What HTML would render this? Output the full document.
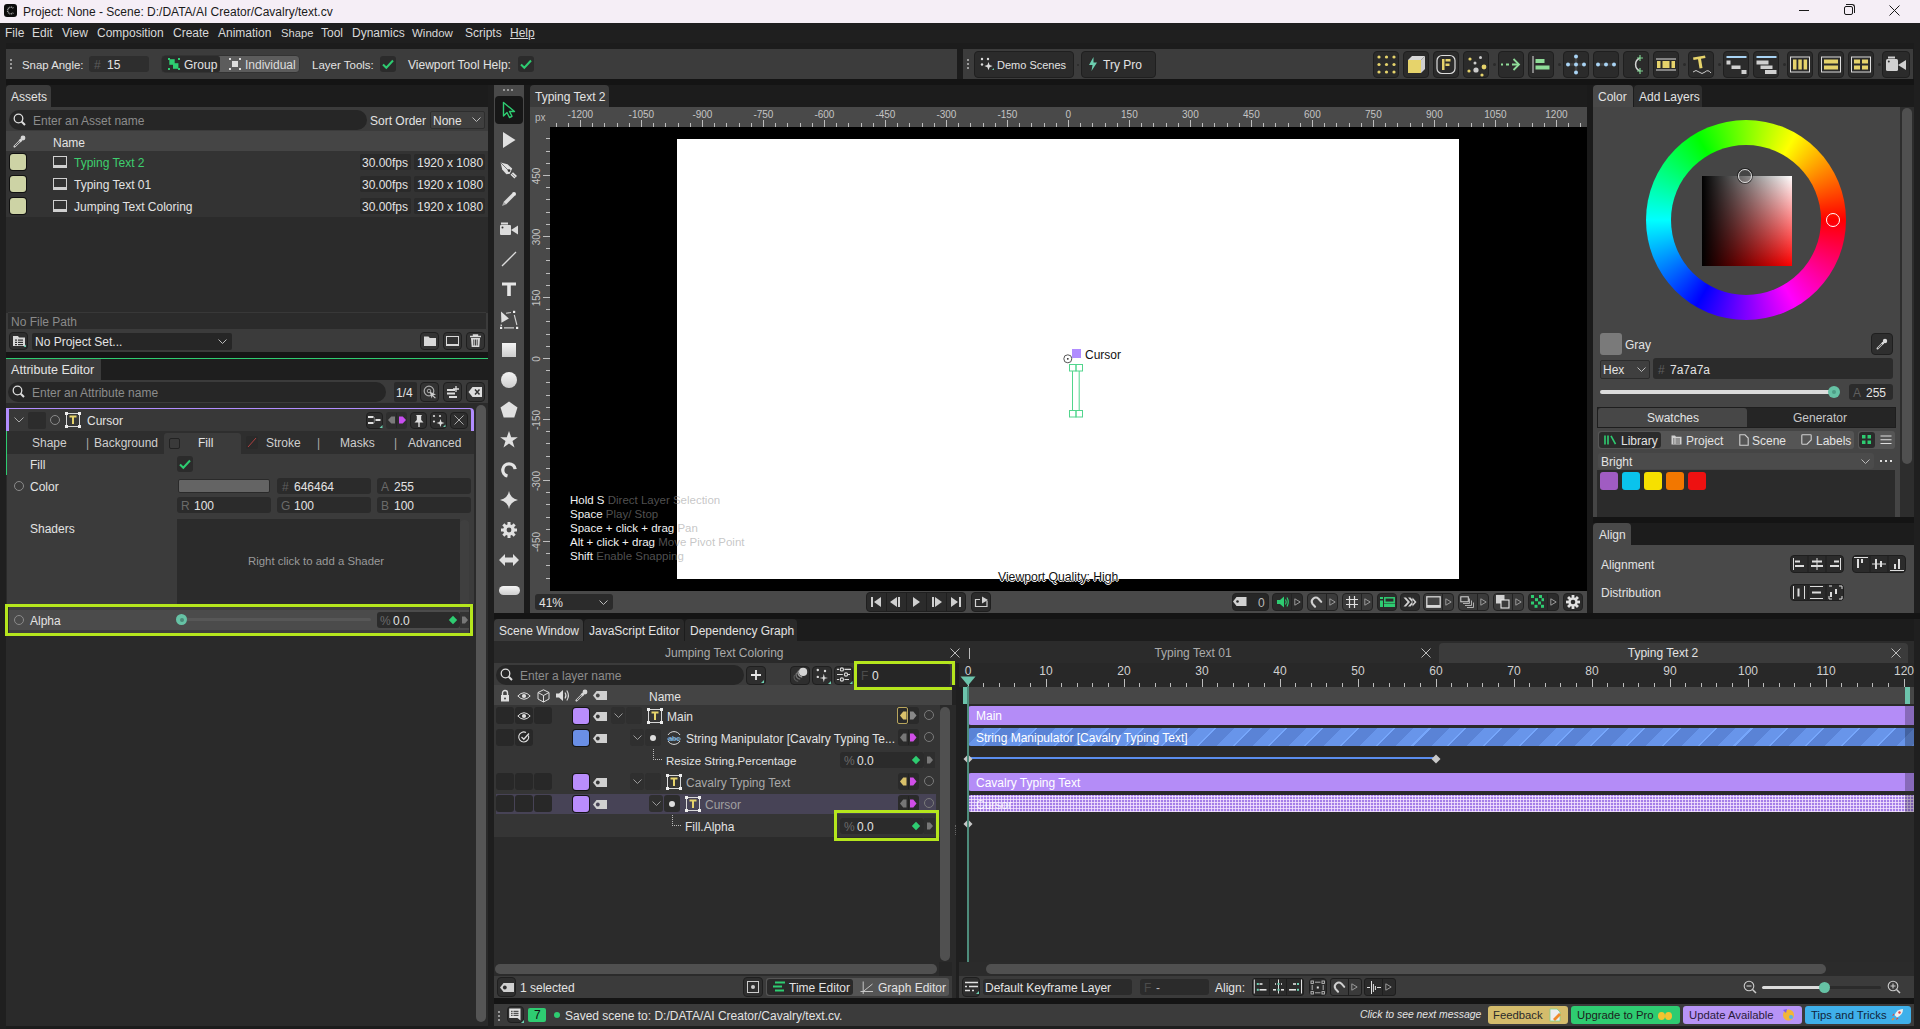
<!DOCTYPE html>
<html><head><meta charset="utf-8">
<style>
*{box-sizing:border-box;margin:0;padding:0}
html,body{width:1920px;height:1029px;overflow:hidden;background:#1c1c1c;font-family:"Liberation Sans",sans-serif;font-size:12px;color:#e3e3e3}
.a{position:absolute}
svg{position:absolute;overflow:visible}
.t{position:absolute;white-space:nowrap;line-height:12px;height:12px}
.panel{position:absolute;background:#3b3b3b}
.tab{position:absolute;background:#3b3b3b;border-radius:4px 4px 0 0}
.fld{position:absolute;background:#262626;border-radius:3px}
.btn{position:absolute;background:#2b2b2b;border:1px solid #1f1f1f;border-radius:4px}
.ph{color:#8c8c8c}
.dim{color:#6e6e6e}
</style></head><body>
<!-- TITLE BAR -->
<div class="a" style="left:0;top:0;width:1920px;height:23px;background:#f5eef6"></div>
<div class="a" style="left:4px;top:4px;width:13px;height:13px;background:#0c0c0c;border-radius:3px"></div>
<svg style="left:4px;top:4px" width="13" height="13"><path d="M9.3 4.2A3.3 3.3 0 1 0 9.3 8.8" fill="none" stroke="#9a9a9a" stroke-width="1.6" stroke-dasharray="1 .6"/></svg>
<div class="t" style="left:23px;top:6px;color:#1a1a1a">Project: None - Scene: D:/DATA/AI Creator/Cavalry/text.cv</div>
<div class="a" style="left:1799px;top:10px;width:10px;height:1px;background:#1a1a1a"></div>
<div class="a" style="left:1844px;top:6px;width:9px;height:9px;border:1px solid #1a1a1a;border-radius:2px"></div>
<div class="a" style="left:1846px;top:4px;width:9px;height:9px;border-top:1px solid #1a1a1a;border-right:1px solid #1a1a1a;border-radius:0 3px 0 0"></div>
<svg style="left:1889px;top:5px" width="11" height="11"><path d="M.5 .5L10.5 10.5M10.5 .5L.5 10.5" stroke="#1a1a1a" stroke-width="1"/></svg>

<!-- MENU -->
<div class="a" style="left:0;top:23px;width:1920px;height:20px;background:#1f1f1f"></div>
<div class="t" style="left:5px;top:27px;color:#d9d9d9">File</div>
<div class="t" style="left:32px;top:27px;color:#d9d9d9">Edit</div>
<div class="t" style="left:62px;top:27px;color:#d9d9d9">View</div>
<div class="t" style="left:97px;top:27px;color:#d9d9d9">Composition</div>
<div class="t" style="left:173px;top:27px;color:#d9d9d9">Create</div>
<div class="t" style="left:218px;top:27px;color:#d9d9d9">Animation</div>
<div class="t" style="left:281px;top:27px;color:#d9d9d9;font-size:11.2px">Shape</div>
<div class="t" style="left:321px;top:27px;color:#d9d9d9">Tool</div>
<div class="t" style="left:352px;top:27px;color:#d9d9d9">Dynamics</div>
<div class="t" style="left:412px;top:27px;color:#d9d9d9;font-size:11.5px">Window</div>
<div class="t" style="left:465px;top:27px;color:#d9d9d9">Scripts</div>
<div class="t" style="left:510px;top:27px;color:#d9d9d9;text-decoration:underline">Help</div>

<!-- GAPBAR --><div class="a" style="left:6px;top:79px;width:1908px;height:6px;background:#141414"></div>
<!-- TOOLBAR 1 -->
<div class="a" style="left:6px;top:49px;width:951px;height:30px;background:#3c3c3c"></div>
<div class="a" style="left:10px;top:59px;width:2px;height:2px;background:#999;box-shadow:0 4px #999,0 8px #999"></div>
<div class="t" style="left:22px;top:59px;font-size:11.4px">Snap Angle:</div>
<div class="fld" style="left:89px;top:56px;width:60px;height:16px;background:#2e2e2e"></div>
<div class="t dim" style="left:94px;top:59px;color:#5c5c5c">#</div>
<div class="t" style="left:107px;top:59px">15</div>
<div class="a" style="left:161px;top:55px;width:139px;height:18px;background:#5c5c5c;border-radius:4px;border:1px solid #333"></div>
<div class="a" style="left:162px;top:56px;width:58px;height:16px;background:#2b2b2b;border-radius:2px"></div>
<svg style="left:168px;top:58px" width="12" height="12"><g fill="#2ecc71"><rect x="0" y="0" width="2" height="2"/><rect x="10" y="0" width="2" height="2"/><rect x="0" y="10" width="2" height="2"/><rect x="10" y="10" width="2" height="2"/><rect x="1.3" y="1.2" width="5.4" height="5.6"/><rect x="5" y="5.2" width="5.4" height="5.6"/></g></svg>
<div class="t" style="left:184px;top:59px">Group</div>
<svg style="left:229px;top:58px" width="12" height="12"><g fill="#ddd"><rect x="0" y="0" width="2" height="2"/><rect x="10" y="0" width="2" height="2"/><rect x="0" y="10" width="2" height="2"/><rect x="10" y="10" width="2" height="2"/><rect x="3" y="3" width="6" height="6"/></g></svg>
<div class="t" style="left:245px;top:59px;color:#dcdcdc">Individual</div>
<div class="t" style="left:312px;top:59px;font-size:11.5px">Layer Tools:</div>
<div class="a" style="left:380px;top:56px;width:16px;height:16px;background:#2b2b2b;border-radius:3px"></div>
<svg style="left:380px;top:56px" width="16" height="16"><path d="M3 8.5L6.3 11.8L13 4.5" fill="none" stroke="#2ecc71" stroke-width="2"/></svg>
<div class="t" style="left:408px;top:59px">Viewport Tool Help:</div>
<div class="a" style="left:518px;top:56px;width:16px;height:16px;background:#2b2b2b;border-radius:3px"></div>
<svg style="left:518px;top:56px" width="16" height="16"><path d="M3 8.5L6.3 11.8L13 4.5" fill="none" stroke="#2ecc71" stroke-width="2"/></svg>

<!-- TOOLBAR 2 -->
<div class="a" style="left:963px;top:49px;width:950px;height:30px;background:#3c3c3c"></div>
<div class="a" style="left:967px;top:59px;width:2px;height:2px;background:#999;box-shadow:0 4px #999,0 8px #999"></div>
<div class="btn" style="left:974px;top:51px;width:100px;height:27px"></div>
<svg style="left:980px;top:57px" width="14" height="14"><g fill="#ddd"><circle cx="2" cy="2" r="1.2"/><circle cx="8" cy="2" r="1.2"/><circle cx="2" cy="7.5" r="1.2"/><path d="M8.5 5L9.6 8L12.6 9.1L9.6 10.2L8.5 13.2L7.4 10.2L4.4 9.1L7.4 8Z"/></g><path d="M12 13L14 11V13Z" fill="#6ccfb0"/></svg>
<div class="t" style="left:997px;top:59px;font-size:11px">Demo Scenes</div>
<div class="a" style="left:1077px;top:64px;width:2px;height:2px;border-radius:1px;background:#2a2a2a"></div>
<div class="btn" style="left:1081px;top:51px;width:75px;height:27px"></div>
<svg style="left:1088px;top:57px" width="10" height="14"><path d="M5.5 0L1 8H4.5L3.5 14L9 5.5H5.5Z" fill="#6ccfb0"/></svg>
<div class="t" style="left:1103px;top:59px">Try Pro</div>

<div class="btn" style="left:1373px;top:51px;width:26px;height:27px"></div>
<div class="btn" style="left:1403px;top:51px;width:26px;height:27px"></div>
<div class="btn" style="left:1433px;top:51px;width:26px;height:27px"></div>
<div class="btn" style="left:1463px;top:51px;width:26px;height:27px"></div>
<div class="btn" style="left:1498px;top:51px;width:26px;height:27px"></div>
<div class="btn" style="left:1528px;top:51px;width:26px;height:27px"></div>
<div class="btn" style="left:1563px;top:51px;width:26px;height:27px"></div>
<div class="btn" style="left:1593px;top:51px;width:26px;height:27px"></div>
<div class="btn" style="left:1623px;top:51px;width:26px;height:27px"></div>
<div class="btn" style="left:1653px;top:51px;width:26px;height:27px"></div>
<div class="btn" style="left:1688px;top:51px;width:26px;height:27px"></div>
<div class="btn" style="left:1723px;top:51px;width:26px;height:27px"></div>
<div class="btn" style="left:1753px;top:51px;width:26px;height:27px"></div>
<div class="btn" style="left:1787px;top:51px;width:26px;height:27px"></div>
<div class="btn" style="left:1818px;top:51px;width:26px;height:27px"></div>
<div class="btn" style="left:1848px;top:51px;width:26px;height:27px"></div>
<div class="btn" style="left:1882px;top:51px;width:28px;height:27px"></div>
<div class="a" style="left:1493px;top:63px;width:3px;height:3px;border-radius:2px;background:#2a2a2a"></div>
<div class="a" style="left:1558px;top:63px;width:3px;height:3px;border-radius:2px;background:#2a2a2a"></div>
<div class="a" style="left:1683px;top:63px;width:3px;height:3px;border-radius:2px;background:#2a2a2a"></div>
<div class="a" style="left:1718px;top:63px;width:3px;height:3px;border-radius:2px;background:#2a2a2a"></div>
<div class="a" style="left:1783px;top:63px;width:3px;height:3px;border-radius:2px;background:#2a2a2a"></div>
<div class="a" style="left:1878px;top:63px;width:3px;height:3px;border-radius:2px;background:#2a2a2a"></div>
<svg style="left:1373px;top:51px" width="26" height="27"><g fill="#e6d36b"><circle cx="6.0" cy="6.0" r="1.6"/><circle cx="13.5" cy="6.0" r="1.6"/><circle cx="21.0" cy="6.0" r="1.6"/><circle cx="6.0" cy="13.5" r="1.6"/><circle cx="13.5" cy="13.5" r="1.6"/><circle cx="21.0" cy="13.5" r="1.6"/><circle cx="6.0" cy="21.0" r="1.6"/><circle cx="13.5" cy="21.0" r="1.6"/><circle cx="21.0" cy="21.0" r="1.6"/></g></svg>
<svg style="left:1403px;top:51px" width="26" height="27"><path d="M5 9L9 5H22L18 9Z" fill="#d8d8d8"/><path d="M18 9L22 5V18L18 22Z" fill="#cfcfcf"/><rect x="5" y="9" width="13" height="13" fill="#e6d36b"/></svg>
<svg style="left:1433px;top:51px" width="26" height="27"><rect x="4" y="4.5" width="18" height="18" rx="5" fill="none" stroke="#ddd" stroke-width="1.2"/><rect x="9" y="8" width="2.5" height="11" fill="#e6d36b"/><rect x="12.5" y="8" width="5" height="2.5" fill="#e6d36b"/><rect x="12.5" y="12.5" width="4" height="2.5" fill="#e6d36b"/></svg>
<svg style="left:1463px;top:51px" width="26" height="27"><circle cx="7" cy="8" r="1.6" fill="#e6d36b"/><circle cx="17.5" cy="6.5" r="1.5" fill="#ccc"/><circle cx="12" cy="12" r="1.5" fill="#ccc"/><circle cx="21" cy="16" r="2.4" fill="#e6d36b"/><circle cx="13" cy="19" r="2.6" fill="#ccc"/><circle cx="6" cy="20" r="1.6" fill="#e6d36b"/><circle cx="19" cy="24" r="1.6" fill="#e6d36b"/></svg>
<svg style="left:1498px;top:51px" width="26" height="27"><path d="M3 13.5H5M8 13.5H11M14 13.5H21" stroke="#8fdc98" stroke-width="1.8"/><path d="M15.5 8L21 13.5L15.5 19" fill="none" stroke="#8fdc98" stroke-width="1.8"/></svg>
<svg style="left:1528px;top:51px" width="26" height="27"><rect x="4.5" y="5" width="1" height="17" fill="#ddd"/><rect x="7.5" y="8" width="9" height="4" fill="#8fdc98"/><rect x="7.5" y="14.5" width="14" height="4" fill="#8fdc98"/></svg>
<svg style="left:1563px;top:51px" width="26" height="27"><path d="M13 6V21M5 13.5H21" stroke="#444" stroke-width="2.5"/><g fill="#a9d4f5"><circle cx="13" cy="5.5" r="2"/><circle cx="13" cy="13.5" r="2"/><circle cx="13" cy="21.5" r="2"/><circle cx="5" cy="13.5" r="2"/><circle cx="21" cy="13.5" r="2"/></g></svg>
<svg style="left:1593px;top:51px" width="26" height="27"><path d="M5 13.5H21" stroke="#444" stroke-width="2.5"/><g fill="#a9d4f5"><circle cx="5" cy="13.5" r="2"/><circle cx="13" cy="13.5" r="2"/><circle cx="21" cy="13.5" r="2"/></g></svg>
<svg style="left:1623px;top:51px" width="26" height="27"><path d="M17 7A7 7 0 0 0 17 20" fill="none" stroke="#d0d0d0" stroke-width="1.5"/><path d="M17 4V10M14 7H20M17 17V23M14 20H20" stroke="#7cd08e" stroke-width="1.2"/></svg>
<svg style="left:1653px;top:51px" width="26" height="27"><path d="M3 8H23M3 19H23" stroke="#ddd" stroke-width="1"/><rect x="4" y="10" width="3.5" height="7" fill="#e6d36b"/><rect x="9.5" y="10" width="7" height="7" fill="#e6d36b"/><rect x="18.5" y="10" width="3.5" height="7" fill="#e6d36b"/></svg>
<svg style="left:1688px;top:51px" width="26" height="27"><path d="M5 6.5L17 4.5L17.5 7L13 7.8L14.5 17L11.5 17.5L10 8.3L5.5 9Z" fill="#e6d36b"/><path d="M5 21Q8 18 11 21T17 21T23 22" fill="none" stroke="#ccc" stroke-width="1"/></svg>
<svg style="left:1723px;top:51px" width="26" height="27"><rect x="3.5" y="5" width="20" height="2" fill="#a9d4f5"/><rect x="3.5" y="9.5" width="4" height="4" fill="#d0d0d0"/><rect x="8.5" y="14.5" width="9" height="3.5" fill="#d0d0d0"/><rect x="18.5" y="19" width="5" height="4" fill="#d0d0d0"/></svg>
<svg style="left:1753px;top:51px" width="26" height="27"><rect x="3.5" y="5" width="20" height="2" fill="#a9d4f5"/><rect x="3.5" y="9.5" width="12" height="4" fill="#d0d0d0"/><rect x="7.5" y="14.5" width="12" height="3.5" fill="#d0d0d0"/><rect x="12" y="19" width="11.5" height="4" fill="#d0d0d0"/></svg>
<svg style="left:1787px;top:51px" width="26" height="27"><rect x="3.5" y="6" width="19" height="15" fill="none" stroke="#ddd" stroke-width="1"/><rect x="6" y="8.5" width="3.5" height="10" fill="#e6d36b"/><rect x="11.3" y="8.5" width="3.5" height="10" fill="#e6d36b"/><rect x="16.6" y="8.5" width="3.5" height="10" fill="#e6d36b"/></svg>
<svg style="left:1818px;top:51px" width="26" height="27"><rect x="3.5" y="6" width="19" height="15" fill="none" stroke="#ddd" stroke-width="1"/><rect x="6" y="8.5" width="14" height="4" fill="#e6d36b"/><rect x="6" y="14.5" width="14" height="4" fill="#e6d36b"/></svg>
<svg style="left:1848px;top:51px" width="26" height="27"><rect x="3.5" y="6" width="19" height="15" fill="none" stroke="#ddd" stroke-width="1"/><rect x="6" y="8.5" width="6" height="4" fill="#e6d36b"/><rect x="14" y="8.5" width="6" height="4" fill="#e6d36b"/><rect x="6" y="14.5" width="6" height="4" fill="#e6d36b"/><rect x="14" y="14.5" width="6" height="4" fill="#e6d36b"/></svg>
<svg style="left:1882px;top:51px" width="28" height="27"><rect x="4" y="8" width="12" height="12" rx="1.5" fill="#d0d0d0"/><rect x="6" y="5.5" width="7" height="2" fill="#d0d0d0"/><path d="M16 14L24 9V19Z" fill="#d0d0d0"/><circle cx="6.8" cy="10.5" r="1" fill="#333"/></svg>
<!-- ============ LEFT: ASSETS ============ -->
<div class="a" style="left:0;top:43px;width:6px;height:986px;background:#1f1f1f"></div>
<div class="tab" style="left:6px;top:85px;width:45px;height:22px;background:#3b3b3b"></div>
<div class="t" style="left:11px;top:91px">Assets</div>
<div class="panel" style="left:6px;top:107px;width:482px;height:245px;background:#3b3b3b"></div>
<div class="a" style="left:9px;top:110px;width:358px;height:20px;background:#262626;border-radius:10px"></div>
<svg style="left:13px;top:113px" width="14" height="14"><circle cx="5.5" cy="5.5" r="4.3" fill="none" stroke="#ddd" stroke-width="1.3"/><path d="M8.7 8.7L12 12" stroke="#ddd" stroke-width="2"/></svg>
<div class="t ph" style="left:33px;top:115px">Enter an Asset name</div>
<div class="t" style="left:370px;top:115px">Sort Order</div>
<div class="a" style="left:430px;top:111px;width:55px;height:18px;background:#3f3f3f;border:1px solid #2d2d2d;border-radius:2px"></div>
<div class="t" style="left:433px;top:115px">None</div>
<svg style="left:472px;top:117px" width="9" height="6"><path d="M.5 .5L4.5 4.5L8.5 .5" fill="none" stroke="#bbb" stroke-width="1"/></svg>
<div class="a" style="left:6px;top:131px;width:482px;height:20px;background:#454545"></div>
<svg style="left:13px;top:135px" width="13" height="13"><path d="M1.5 11.5L8 5" stroke="#ccc" stroke-width="2.2" stroke-linecap="round"/><path d="M2 11L7.8 5.2" stroke="#454545" stroke-width=".9"/><circle cx="10" cy="3" r="2.4" fill="#d6d6d6"/><path d="M6.5 4.5L8.5 6.5" stroke="#d6d6d6" stroke-width="2.5"/></svg>
<div class="t" style="left:53px;top:137px">Name</div>
<div class="a" style="left:6px;top:151px;width:482px;height:66px;background:#333"></div>
<div class="a" style="left:6px;top:217px;width:482px;height:96px;background:#2b2b2b"></div>
<!-- rows -->
<div class="a" style="left:10px;top:154px;width:16px;height:16px;background:#cdd3a5;border-radius:3px;box-shadow:0 0 0 1px #111"></div>
<div class="a" style="left:10px;top:176px;width:16px;height:16px;background:#cdd3a5;border-radius:3px;box-shadow:0 0 0 1px #111"></div>
<div class="a" style="left:10px;top:198px;width:16px;height:16px;background:#cdd3a5;border-radius:3px;box-shadow:0 0 0 1px #111"></div>
<div class="a" style="left:53px;top:156px;width:14px;height:12px;border:1.3px solid #d0d0d0;border-bottom-width:3px"></div>
<div class="a" style="left:53px;top:178px;width:14px;height:12px;border:1.3px solid #d0d0d0;border-bottom-width:3px"></div>
<div class="a" style="left:53px;top:200px;width:14px;height:12px;border:1.3px solid #d0d0d0;border-bottom-width:3px"></div>
<div class="t" style="left:74px;top:157px;color:#3ecf6e">Typing Text 2</div>
<div class="t" style="left:74px;top:179px">Typing Text 01</div>
<div class="t" style="left:74px;top:201px">Jumping Text Coloring</div>
<div class="a" style="left:360px;top:154px;width:51px;height:16px;background:#2a2a2a;border-radius:2px"></div>
<div class="a" style="left:414px;top:154px;width:71px;height:16px;background:#2a2a2a;border-radius:2px"></div>
<div class="a" style="left:360px;top:176px;width:51px;height:16px;background:#2a2a2a;border-radius:2px"></div>
<div class="a" style="left:414px;top:176px;width:71px;height:16px;background:#2a2a2a;border-radius:2px"></div>
<div class="a" style="left:360px;top:198px;width:51px;height:16px;background:#2a2a2a;border-radius:2px"></div>
<div class="a" style="left:414px;top:198px;width:71px;height:16px;background:#2a2a2a;border-radius:2px"></div>
<div class="t" style="left:362px;top:157px">30.00fps</div><div class="t" style="left:417px;top:157px">1920 x 1080</div>
<div class="t" style="left:362px;top:179px">30.00fps</div><div class="t" style="left:417px;top:179px">1920 x 1080</div>
<div class="t" style="left:362px;top:201px">30.00fps</div><div class="t" style="left:417px;top:201px">1920 x 1080</div>
<!-- file path -->
<div class="a" style="left:8px;top:312px;width:478px;height:17px;background:#2b2b2b;border-top:1px solid #383838"></div>
<div class="t" style="left:11px;top:316px;color:#8a8a8a">No File Path</div>
<div class="btn" style="left:9px;top:332px;width:19px;height:18px;background:#2e2e2e"></div>
<svg style="left:12px;top:335px" width="14" height="12"><path d="M1 1H6L7 2.5H13V11H1Z" fill="#d8d8d8"/><g fill="#2e2e2e"><rect x="3" y="4.5" width="2" height="1.2"/><rect x="6" y="4.5" width="5" height="1.2"/><rect x="3" y="6.8" width="2" height="1.2"/><rect x="6" y="6.8" width="5" height="1.2"/><rect x="3" y="9" width="2" height="1.2"/><rect x="6" y="9" width="5" height="1.2"/></g><path d="M11.5 12L14 9.5V12Z" fill="#6ccfb0"/></svg>
<div class="a" style="left:32px;top:333px;width:200px;height:17px;background:#262626;border-radius:2px"></div>
<div class="t" style="left:35px;top:336px">No Project Set...</div>
<svg style="left:218px;top:339px" width="9" height="6"><path d="M.5 .5L4.5 4.5L8.5 .5" fill="none" stroke="#bbb" stroke-width="1"/></svg>
<div class="btn" style="left:420px;top:332px;width:19px;height:18px;background:#333"></div>
<svg style="left:423px;top:335px" width="14" height="12"><path d="M1 1.5H5.5L6.8 3H13V11H1Z" fill="#d8d8d8"/></svg>
<div class="btn" style="left:443px;top:332px;width:19px;height:18px;background:#333"></div>
<div class="a" style="left:446px;top:336px;width:13px;height:10px;border:1.3px solid #d8d8d8;border-bottom-width:2.5px"></div>
<div class="btn" style="left:466px;top:332px;width:19px;height:18px;background:#333"></div>
<svg style="left:469px;top:334px" width="13" height="14"><path d="M1 2.5H12M4.5 2.5V1H8.5V2.5" stroke="#d8d8d8" stroke-width="1.4" fill="none"/><path d="M2 4H11L10.3 13H2.7Z" fill="#d8d8d8"/><path d="M4.8 5.5V11.5M6.5 5.5V11.5M8.2 5.5V11.5" stroke="#333" stroke-width=".9"/></svg>
<div class="a" style="left:6px;top:352px;width:482px;height:6px;background:#161616"></div>
<div class="a" style="left:6px;top:358px;width:482px;height:1px;background:#2ecc71"></div>

<!-- ============ LEFT: ATTRIBUTE EDITOR ============ -->
<div class="a" style="left:6px;top:359px;width:482px;height:21px;background:#1e1e1e"></div>
<div class="tab" style="left:6px;top:359px;width:95px;height:21px;background:#3b3b3b;border-radius:0"></div>
<div class="t" style="left:11px;top:364px;font-size:12.6px">Attribute Editor</div>
<div class="panel" style="left:6px;top:380px;width:482px;height:25px;background:#3b3b3b"></div>
<div class="a" style="left:8px;top:382px;width:378px;height:20px;background:#262626;border-radius:10px"></div>
<svg style="left:12px;top:385px" width="14" height="14"><circle cx="5.5" cy="5.5" r="4.3" fill="none" stroke="#ddd" stroke-width="1.3"/><path d="M8.7 8.7L12 12" stroke="#ddd" stroke-width="2"/></svg>
<div class="t ph" style="left:32px;top:387px">Enter an Attribute name</div>
<div class="a" style="left:394px;top:382px;width:23px;height:20px;background:#2a2a2a;border-radius:2px"></div>
<div class="t" style="left:396px;top:387px">1/4</div>
<div class="btn" style="left:420px;top:382px;width:19px;height:20px;background:#333"></div>
<svg style="left:423px;top:385px" width="14" height="14"><circle cx="6" cy="6" r="4.8" fill="none" stroke="#aaa" stroke-width="1.2"/><circle cx="6" cy="6" r="1.8" fill="none" stroke="#aaa" stroke-width="1"/><path d="M6.5 6.5L13 9.5L10.2 10.2L12.8 12.8L12 13.6L9.4 11L8.8 13.4Z" fill="#ccc"/></svg>
<div class="btn" style="left:443px;top:382px;width:19px;height:20px;background:#333"></div>
<svg style="left:446px;top:385px" width="14" height="14"><g fill="#ddd"><rect x="1" y="4" width="8" height="2"/><rect x="1" y="7.5" width="8" height="2"/><rect x="3" y="11" width="8" height="2"/><path d="M10 1V7M7 4H13" stroke="#ddd" stroke-width="1.3"/></g></svg>
<div class="btn" style="left:466px;top:382px;width:19px;height:20px;background:#333"></div>
<svg style="left:468px;top:386px" width="15" height="12"><path d="M4.5 1H14V11H4.5L.5 6Z" fill="#ddd"/><path d="M7 3.5L11.5 8.5M11.5 3.5L7 8.5" stroke="#333" stroke-width="1.5"/></svg>
<div class="panel" style="left:6px;top:403px;width:482px;height:623px;background:#2a2a2a"></div>
<div class="a" style="left:476px;top:405px;width:10px;height:617px;background:#555;border-radius:5px"></div>
<!-- Cursor header -->
<div class="a" style="left:6px;top:408px;width:468px;height:23px;background:#383838;border-top:1.5px solid #b28dff;border-left:3px solid #b28dff;border-right:3.5px solid #b28dff;border-radius:0 4px 0 0"></div>
<svg style="left:14px;top:417px" width="10" height="6"><path d="M.5 .5L5 5L9.5 .5" fill="none" stroke="#aaa" stroke-width="1"/></svg>
<div class="a" style="left:28px;top:412px;width:18px;height:17px;background:#2c2c2c;border-radius:2px"></div>
<div class="a" style="left:50px;top:415px;width:10px;height:10px;border:1.2px solid #8a8a8a;border-radius:50%"></div>
<svg style="left:65px;top:412px" width="16" height="16"><rect x="1.5" y="1.5" width="13" height="13" fill="none" stroke="#d8d8d8" stroke-width="1"/><g fill="#eee"><rect x="0" y="0" width="3" height="3"/><rect x="13" y="0" width="3" height="3"/><rect x="0" y="13" width="3" height="3"/><rect x="13" y="13" width="3" height="3"/></g><path d="M4.5 4.5H11.5M8 4.5V12" stroke="#e6d36b" stroke-width="2"/></svg>
<div class="t" style="left:87px;top:415px">Cursor</div>
<div class="btn" style="left:366px;top:412px;width:17px;height:17px;background:#2e2e2e"></div>
<svg style="left:367px;top:414px" width="16" height="14"><g fill="#e0e0e0"><rect x="1" y="2" width="5.5" height="2"/><rect x="1" y="8" width="5.5" height="2"/><rect x="8.5" y="5" width="5" height="2"/></g><path d="M7.3 3V9M7.3 6H8.5" stroke="#888" stroke-width=".8"/><path d="M12.5 14L15.5 11V14Z" fill="#6ccfb0"/></svg>
<div class="a" style="left:386px;top:412px;width:21px;height:17px;background:#2e2e2e;border-radius:3px"></div>
<div class="a" style="left:396px;top:413px;width:1px;height:15px;background:#262626"></div><svg style="left:387px;top:416px" width="20" height="8"><path d="M8 .5V7.5H4.3L1 4L4.3 .5Z" fill="#7a7a7a"/><path d="M12 .5H15.7L19 4L15.7 7.5H12Z" fill="#c84ef0"/></svg>
<div class="btn" style="left:410px;top:412px;width:17px;height:17px;background:#2e2e2e"></div>
<svg style="left:413px;top:414px" width="12" height="14"><path d="M3 1H9L8.2 2.3V6L10.5 8.5H1.5L3.8 6V2.3Z" fill="#ddd"/><path d="M6 8V13" stroke="#ddd" stroke-width="1.4"/></svg>
<div class="btn" style="left:430px;top:412px;width:17px;height:17px;background:#2e2e2e"></div>
<svg style="left:432px;top:414px" width="14" height="14"><g fill="#ddd"><circle cx="2" cy="2" r="1.1"/><circle cx="8" cy="2" r="1.1"/><circle cx="2" cy="7.5" r="1.1"/><path d="M8.5 5L9.5 8L12.5 9L9.5 10L8.5 13L7.5 10L4.5 9L7.5 8Z"/></g><path d="M11 13L13.5 10.5V13Z" fill="#6ccfb0"/></svg>
<div class="btn" style="left:450px;top:412px;width:18px;height:17px;background:#2e2e2e"></div>
<svg style="left:454px;top:415px" width="10" height="10"><path d="M.5 .5L9.5 9.5M9.5 .5L.5 9.5" stroke="#bbb" stroke-width=".9"/></svg>
<!-- tabs row -->
<div class="a" style="left:6px;top:431px;width:468px;height:23px;background:#2e2e2e"></div>
<div class="a" style="left:6px;top:431px;width:1px;height:44px;background:#2ecc71"></div>
<div class="t" style="left:32px;top:437px;color:#cfcfcf">Shape</div>
<div class="t" style="left:86px;top:437px;color:#aaa">|</div>
<div class="t" style="left:94px;top:437px;color:#cfcfcf">Background</div>
<div class="a" style="left:164px;top:433px;width:77px;height:21px;background:#3b3b3b;border-radius:3px 3px 0 0"></div>
<div class="a" style="left:169px;top:438px;width:11px;height:11px;background:#3a3a3a;border:1.5px solid #222;border-radius:2px"></div>
<div class="t" style="left:198px;top:437px">Fill</div>
<div class="a" style="left:246px;top:436px;width:12px;height:13px;background:#2a2a2a;border-radius:2px"></div>
<svg style="left:247px;top:437px" width="10" height="11"><path d="M1 10L9 1" stroke="#b04040" stroke-width="1"/></svg>
<div class="t" style="left:266px;top:437px;color:#cfcfcf">Stroke</div>
<div class="t" style="left:317px;top:437px;color:#aaa">|</div>
<div class="t" style="left:340px;top:437px;color:#cfcfcf">Masks</div>
<div class="t" style="left:394px;top:437px;color:#aaa">|</div>
<div class="t" style="left:408px;top:437px;color:#cfcfcf">Advanced</div>
<!-- content -->
<div class="a" style="left:7px;top:454px;width:467px;height:150px;background:#3b3b3b"></div>
<div class="t" style="left:30px;top:459px">Fill</div>
<div class="a" style="left:177px;top:456px;width:16px;height:16px;background:#2b2b2b;border-radius:3px"></div>
<svg style="left:177px;top:456px" width="16" height="16"><path d="M3 8.5L6.3 11.8L13 4.5" fill="none" stroke="#2ecc71" stroke-width="2"/></svg>
<div class="a" style="left:14px;top:481px;width:10px;height:10px;border:1.2px solid #8a8a8a;border-radius:50%"></div>
<div class="t" style="left:30px;top:481px">Color</div>
<div class="a" style="left:178px;top:479px;width:92px;height:14px;background:#646464;border:1px solid #2a2a2a;border-radius:2px"></div>
<div class="fld" style="left:277px;top:478px;width:94px;height:16px;background:#2b2b2b"></div>
<div class="t" style="left:282px;top:481px;color:#5e5e5e">#</div>
<div class="t" style="left:294px;top:481px">646464</div>
<div class="fld" style="left:377px;top:478px;width:94px;height:16px;background:#2b2b2b"></div>
<div class="t" style="left:381px;top:481px;color:#6a6a6a">A</div>
<div class="t" style="left:394px;top:481px">255</div>
<div class="fld" style="left:177px;top:497px;width:94px;height:16px;background:#2b2b2b"></div>
<div class="t" style="left:181px;top:500px;color:#6a6a6a">R</div>
<div class="t" style="left:194px;top:500px">100</div>
<div class="fld" style="left:277px;top:497px;width:94px;height:16px;background:#2b2b2b"></div>
<div class="t" style="left:281px;top:500px;color:#6a6a6a">G</div>
<div class="t" style="left:294px;top:500px">100</div>
<div class="fld" style="left:377px;top:497px;width:94px;height:16px;background:#2b2b2b"></div>
<div class="t" style="left:381px;top:500px;color:#6a6a6a">B</div>
<div class="t" style="left:394px;top:500px">100</div>
<div class="t" style="left:30px;top:523px">Shaders</div>
<div class="a" style="left:177px;top:519px;width:283px;height:85px;background:#2b2b2b"></div>
<div class="a" style="left:460px;top:520px;width:9px;height:84px;background:#3f3f3f;border-radius:4px"></div>
<div class="t" style="left:248px;top:555px;color:#9a9a9a;font-size:11.4px">Right click to add a Shader</div>
<!-- alpha -->
<div class="a" style="left:5px;top:604px;width:468px;height:32px;border:3px solid #b5e61d"></div>
<div class="a" style="left:9px;top:607px;width:460px;height:26px;background:#3f3f3f"></div><div class="a" style="left:9px;top:610px;width:460px;height:20px;background:#4b4b4b"></div>
<div class="a" style="left:14px;top:615px;width:10px;height:10px;border:1.2px solid #8a8a8a;border-radius:50%"></div>
<div class="t" style="left:30px;top:615px">Alpha</div>
<div class="a" style="left:182px;top:618px;width:189px;height:3px;background:#575757;border-radius:2px"></div>
<div class="a" style="left:176px;top:614px;width:11px;height:11px;background:#66c2a5;border-radius:50%"></div>
<div class="a" style="left:179.5px;top:617.5px;width:4px;height:4px;background:#4a8a78;border-radius:50%"></div>
<div class="fld" style="left:377px;top:612px;width:83px;height:16px;background:#2b2b2b"></div>
<div class="t" style="left:380px;top:615px;color:#6a6a6a">%</div>
<div class="t" style="left:393px;top:615px">0.0</div>
<svg style="left:448px;top:615px" width="10" height="10"><path d="M5 .8L9.2 5L5 9.2L.8 5Z" fill="#2ecc71"/></svg>
<div class="a" style="left:460px;top:612px;width:9px;height:16px;background:#333"></div>
<svg style="left:462px;top:616px" width="6" height="8"><path d="M0 .5H3L6 4L3 7.5H0Z" fill="#777"/></svg>

<!-- ============ TOOLS COLUMN ============ -->
<div class="a" style="left:488px;top:85px;width:6px;height:528px;background:#1e1e1e"></div>
<div class="a" style="left:494px;top:85px;width:30px;height:528px;background:#494949"></div>
<div class="a" style="left:524px;top:85px;width:6px;height:528px;background:#1a1a1a"></div>
<div class="a" style="left:503px;top:89px;width:2px;height:2px;background:#999;box-shadow:4px 0 #999,8px 0 #999"></div>
<div class="a" style="left:495px;top:96px;width:28px;height:28px;background:#171717;border-radius:4px"></div>
<svg style="left:502px;top:101px" width="14" height="18"><path d="M1.5 1.5V15L5 11.5L7.5 16.5L10 15.3L7.5 10.5H12.5Z" fill="none" stroke="#2ecc71" stroke-width="1.4" stroke-linejoin="round"/></svg>
<svg style="left:502px;top:131px" width="14" height="18"><path d="M1 1V17L13.5 9Z" fill="#e0e0e0"/></svg>
<svg style="left:499px;top:161px" width="20" height="20"><path d="M1.6 1.6L8.5 3.2L13.2 7.4L10.8 12.8L7.4 13.2L3.2 8.5Z" fill="#dedede"/><path d="M1.6 1.6L9.3 9.3" stroke="#444" stroke-width=".7"/><circle cx="10" cy="9.6" r="1.3" fill="#333"/><path d="M11.5 13.8L14 11.2L18 15L15.4 17.6Z" fill="#e2e2e2"/><path d="M12.6 12.6L16.6 16.4" stroke="#555" stroke-width=".6"/></svg>
<svg style="left:501px;top:191px" width="16" height="16"><path d="M2.5 11L11 2.5L13.5 5L5 13.5Z" fill="#dcdcdc"/><path d="M2.5 11L1 15L5 13.5Z" fill="#aaa"/><circle cx="13" cy="3" r="2" fill="#e8e8e8"/></svg>
<svg style="left:499px;top:222px" width="20" height="14"><rect x="1" y="3" width="11" height="10" rx="1" fill="#dcdcdc"/><rect x="2" y="0.5" width="7" height="2" fill="#dcdcdc"/><path d="M12 8L19 3.5V12.5Z" fill="#dcdcdc"/><circle cx="3.5" cy="5.5" r="1" fill="#333"/></svg>
<svg style="left:501px;top:251px" width="16" height="16"><path d="M1 15L15 1" stroke="#dcdcdc" stroke-width="1.3"/></svg>
<svg style="left:501px;top:281px" width="16" height="16"><path d="M1 1.5H15V4.5H9.8V15H6.2V4.5H1Z" fill="#e6e6e6"/></svg>
<svg style="left:498px;top:309px" width="22" height="22"><path d="M3 2.4L10.9 9.4L3.4 13.7Z" fill="#e0e0e0"/><g fill="#f2f2f2"><rect x="15" y="1.8" width="2.2" height="2.2"/><rect x="2" y="17.8" width="2.2" height="2.2"/><rect x="18" y="17.8" width="2.2" height="2.2"/><rect x="2.6" y="15.6" width="1.3" height="1.3"/></g><path d="M8 4.3L13 3.5M16.3 6L18.9 16M6 18.9H16" stroke="#d0d0d0" stroke-width="1.1"/></svg>
<div class="a" style="left:502px;top:343px;width:14px;height:14px;background:linear-gradient(#f4f4f4,#cdcdcd)"></div>
<div class="a" style="left:501px;top:372px;width:16px;height:16px;border-radius:50%;background:linear-gradient(#f4f4f4,#cdcdcd)"></div>
<svg style="left:500px;top:401px" width="18" height="17"><path d="M9 .5L17.5 6.5L14.3 16.5H3.7L.5 6.5Z" fill="#e0e0e0"/></svg>
<svg style="left:500px;top:431px" width="18" height="17"><path d="M9 0L11.2 6.2H17.8L12.5 10L14.5 16.5L9 12.5L3.5 16.5L5.5 10L.2 6.2H6.8Z" fill="#e0e0e0"/></svg>
<svg style="left:501px;top:462px" width="16" height="16"><path d="M14.14 7.14A6.2 6.2 0 1 0 6.5 14.0" fill="none" stroke="#e4e4e4" stroke-width="3.3"/></svg>
<svg style="left:500px;top:491px" width="18" height="18"><path d="M9 0Q10 7 18 9Q10 11 9 18Q8 11 0 9Q8 7 9 0Z" fill="#e0e0e0"/></svg>
<svg style="left:500px;top:521px" width="18" height="18"><g transform="translate(9 9)" fill="#e0e0e0"><circle r="5.8"/><rect x="-1.5" y="-8" width="3" height="16"/><rect x="-1.5" y="-8" width="3" height="16" transform="rotate(45)"/><rect x="-1.5" y="-8" width="3" height="16" transform="rotate(90)"/><rect x="-1.5" y="-8" width="3" height="16" transform="rotate(135)"/><circle r="2.4" fill="#494949"/></g></svg>
<svg style="left:499px;top:553px" width="20" height="14"><path d="M0 7L6 1V4.5H14V1L20 7L14 13V9.5H6V13Z" fill="#e0e0e0"/></svg>
<div class="a" style="left:499px;top:586px;width:21px;height:9px;border-radius:5px;background:linear-gradient(#f4f4f4,#cdcdcd)"></div>
<!-- ============ VIEWPORT ============ -->
<div class="a" style="left:530px;top:85px;width:1057px;height:22px;background:#1c1c1c"></div>
<div class="tab" style="left:530px;top:85px;width:79px;height:22px;background:#3b3b3b"></div>
<div class="t" style="left:535px;top:91px">Typing Text 2</div>
<div class="a" style="left:530px;top:107px;width:1057px;height:506px;background:#494949"></div>
<div class="a" style="left:550px;top:127px;width:1037px;height:464px;background:#000"></div>
<div class="t" style="left:535px;top:112px;font-size:10px;color:#bdbdbd">px</div>
<div class="a" style="left:555.5px;top:123px;width:1px;height:4px;background:#bdbdbd"></div>
<div class="a" style="left:567.7px;top:123px;width:1px;height:4px;background:#bdbdbd"></div>
<div class="a" style="left:579.9px;top:120px;width:1px;height:7px;background:#bdbdbd"></div>
<div class="t" style="left:540.4px;top:110px;width:80px;text-align:center;font-size:10px;line-height:10px;color:#c4c4c4">-1200</div>
<div class="a" style="left:592.1px;top:123px;width:1px;height:4px;background:#bdbdbd"></div>
<div class="a" style="left:604.3px;top:123px;width:1px;height:4px;background:#bdbdbd"></div>
<div class="a" style="left:616.5px;top:123px;width:1px;height:4px;background:#bdbdbd"></div>
<div class="a" style="left:628.7px;top:123px;width:1px;height:4px;background:#bdbdbd"></div>
<div class="a" style="left:640.9px;top:120px;width:1px;height:7px;background:#bdbdbd"></div>
<div class="t" style="left:601.4px;top:110px;width:80px;text-align:center;font-size:10px;line-height:10px;color:#c4c4c4">-1050</div>
<div class="a" style="left:653.1px;top:123px;width:1px;height:4px;background:#bdbdbd"></div>
<div class="a" style="left:665.3px;top:123px;width:1px;height:4px;background:#bdbdbd"></div>
<div class="a" style="left:677.5px;top:123px;width:1px;height:4px;background:#bdbdbd"></div>
<div class="a" style="left:689.7px;top:123px;width:1px;height:4px;background:#bdbdbd"></div>
<div class="a" style="left:701.9px;top:120px;width:1px;height:7px;background:#bdbdbd"></div>
<div class="t" style="left:662.4px;top:110px;width:80px;text-align:center;font-size:10px;line-height:10px;color:#c4c4c4">-900</div>
<div class="a" style="left:714.1px;top:123px;width:1px;height:4px;background:#bdbdbd"></div>
<div class="a" style="left:726.3px;top:123px;width:1px;height:4px;background:#bdbdbd"></div>
<div class="a" style="left:738.5px;top:123px;width:1px;height:4px;background:#bdbdbd"></div>
<div class="a" style="left:750.7px;top:123px;width:1px;height:4px;background:#bdbdbd"></div>
<div class="a" style="left:762.9px;top:120px;width:1px;height:7px;background:#bdbdbd"></div>
<div class="t" style="left:723.4px;top:110px;width:80px;text-align:center;font-size:10px;line-height:10px;color:#c4c4c4">-750</div>
<div class="a" style="left:775.1px;top:123px;width:1px;height:4px;background:#bdbdbd"></div>
<div class="a" style="left:787.3px;top:123px;width:1px;height:4px;background:#bdbdbd"></div>
<div class="a" style="left:799.5px;top:123px;width:1px;height:4px;background:#bdbdbd"></div>
<div class="a" style="left:811.7px;top:123px;width:1px;height:4px;background:#bdbdbd"></div>
<div class="a" style="left:823.9px;top:120px;width:1px;height:7px;background:#bdbdbd"></div>
<div class="t" style="left:784.4px;top:110px;width:80px;text-align:center;font-size:10px;line-height:10px;color:#c4c4c4">-600</div>
<div class="a" style="left:836.1px;top:123px;width:1px;height:4px;background:#bdbdbd"></div>
<div class="a" style="left:848.3px;top:123px;width:1px;height:4px;background:#bdbdbd"></div>
<div class="a" style="left:860.5px;top:123px;width:1px;height:4px;background:#bdbdbd"></div>
<div class="a" style="left:872.7px;top:123px;width:1px;height:4px;background:#bdbdbd"></div>
<div class="a" style="left:884.9px;top:120px;width:1px;height:7px;background:#bdbdbd"></div>
<div class="t" style="left:845.4px;top:110px;width:80px;text-align:center;font-size:10px;line-height:10px;color:#c4c4c4">-450</div>
<div class="a" style="left:897.1px;top:123px;width:1px;height:4px;background:#bdbdbd"></div>
<div class="a" style="left:909.3px;top:123px;width:1px;height:4px;background:#bdbdbd"></div>
<div class="a" style="left:921.5px;top:123px;width:1px;height:4px;background:#bdbdbd"></div>
<div class="a" style="left:933.7px;top:123px;width:1px;height:4px;background:#bdbdbd"></div>
<div class="a" style="left:945.9px;top:120px;width:1px;height:7px;background:#bdbdbd"></div>
<div class="t" style="left:906.4px;top:110px;width:80px;text-align:center;font-size:10px;line-height:10px;color:#c4c4c4">-300</div>
<div class="a" style="left:958.1px;top:123px;width:1px;height:4px;background:#bdbdbd"></div>
<div class="a" style="left:970.3px;top:123px;width:1px;height:4px;background:#bdbdbd"></div>
<div class="a" style="left:982.5px;top:123px;width:1px;height:4px;background:#bdbdbd"></div>
<div class="a" style="left:994.7px;top:123px;width:1px;height:4px;background:#bdbdbd"></div>
<div class="a" style="left:1006.9px;top:120px;width:1px;height:7px;background:#bdbdbd"></div>
<div class="t" style="left:967.4px;top:110px;width:80px;text-align:center;font-size:10px;line-height:10px;color:#c4c4c4">-150</div>
<div class="a" style="left:1019.1px;top:123px;width:1px;height:4px;background:#bdbdbd"></div>
<div class="a" style="left:1031.3px;top:123px;width:1px;height:4px;background:#bdbdbd"></div>
<div class="a" style="left:1043.5px;top:123px;width:1px;height:4px;background:#bdbdbd"></div>
<div class="a" style="left:1055.7px;top:123px;width:1px;height:4px;background:#bdbdbd"></div>
<div class="a" style="left:1067.9px;top:120px;width:1px;height:7px;background:#bdbdbd"></div>
<div class="t" style="left:1028.4px;top:110px;width:80px;text-align:center;font-size:10px;line-height:10px;color:#c4c4c4">0</div>
<div class="a" style="left:1080.1px;top:123px;width:1px;height:4px;background:#bdbdbd"></div>
<div class="a" style="left:1092.3px;top:123px;width:1px;height:4px;background:#bdbdbd"></div>
<div class="a" style="left:1104.5px;top:123px;width:1px;height:4px;background:#bdbdbd"></div>
<div class="a" style="left:1116.7px;top:123px;width:1px;height:4px;background:#bdbdbd"></div>
<div class="a" style="left:1128.9px;top:120px;width:1px;height:7px;background:#bdbdbd"></div>
<div class="t" style="left:1089.4px;top:110px;width:80px;text-align:center;font-size:10px;line-height:10px;color:#c4c4c4">150</div>
<div class="a" style="left:1141.1px;top:123px;width:1px;height:4px;background:#bdbdbd"></div>
<div class="a" style="left:1153.3px;top:123px;width:1px;height:4px;background:#bdbdbd"></div>
<div class="a" style="left:1165.5px;top:123px;width:1px;height:4px;background:#bdbdbd"></div>
<div class="a" style="left:1177.7px;top:123px;width:1px;height:4px;background:#bdbdbd"></div>
<div class="a" style="left:1189.9px;top:120px;width:1px;height:7px;background:#bdbdbd"></div>
<div class="t" style="left:1150.4px;top:110px;width:80px;text-align:center;font-size:10px;line-height:10px;color:#c4c4c4">300</div>
<div class="a" style="left:1202.1px;top:123px;width:1px;height:4px;background:#bdbdbd"></div>
<div class="a" style="left:1214.3px;top:123px;width:1px;height:4px;background:#bdbdbd"></div>
<div class="a" style="left:1226.5px;top:123px;width:1px;height:4px;background:#bdbdbd"></div>
<div class="a" style="left:1238.7px;top:123px;width:1px;height:4px;background:#bdbdbd"></div>
<div class="a" style="left:1250.9px;top:120px;width:1px;height:7px;background:#bdbdbd"></div>
<div class="t" style="left:1211.4px;top:110px;width:80px;text-align:center;font-size:10px;line-height:10px;color:#c4c4c4">450</div>
<div class="a" style="left:1263.1px;top:123px;width:1px;height:4px;background:#bdbdbd"></div>
<div class="a" style="left:1275.3px;top:123px;width:1px;height:4px;background:#bdbdbd"></div>
<div class="a" style="left:1287.5px;top:123px;width:1px;height:4px;background:#bdbdbd"></div>
<div class="a" style="left:1299.7px;top:123px;width:1px;height:4px;background:#bdbdbd"></div>
<div class="a" style="left:1311.9px;top:120px;width:1px;height:7px;background:#bdbdbd"></div>
<div class="t" style="left:1272.4px;top:110px;width:80px;text-align:center;font-size:10px;line-height:10px;color:#c4c4c4">600</div>
<div class="a" style="left:1324.1px;top:123px;width:1px;height:4px;background:#bdbdbd"></div>
<div class="a" style="left:1336.3px;top:123px;width:1px;height:4px;background:#bdbdbd"></div>
<div class="a" style="left:1348.5px;top:123px;width:1px;height:4px;background:#bdbdbd"></div>
<div class="a" style="left:1360.7px;top:123px;width:1px;height:4px;background:#bdbdbd"></div>
<div class="a" style="left:1372.9px;top:120px;width:1px;height:7px;background:#bdbdbd"></div>
<div class="t" style="left:1333.4px;top:110px;width:80px;text-align:center;font-size:10px;line-height:10px;color:#c4c4c4">750</div>
<div class="a" style="left:1385.1px;top:123px;width:1px;height:4px;background:#bdbdbd"></div>
<div class="a" style="left:1397.3px;top:123px;width:1px;height:4px;background:#bdbdbd"></div>
<div class="a" style="left:1409.5px;top:123px;width:1px;height:4px;background:#bdbdbd"></div>
<div class="a" style="left:1421.7px;top:123px;width:1px;height:4px;background:#bdbdbd"></div>
<div class="a" style="left:1433.9px;top:120px;width:1px;height:7px;background:#bdbdbd"></div>
<div class="t" style="left:1394.4px;top:110px;width:80px;text-align:center;font-size:10px;line-height:10px;color:#c4c4c4">900</div>
<div class="a" style="left:1446.1px;top:123px;width:1px;height:4px;background:#bdbdbd"></div>
<div class="a" style="left:1458.3px;top:123px;width:1px;height:4px;background:#bdbdbd"></div>
<div class="a" style="left:1470.5px;top:123px;width:1px;height:4px;background:#bdbdbd"></div>
<div class="a" style="left:1482.7px;top:123px;width:1px;height:4px;background:#bdbdbd"></div>
<div class="a" style="left:1494.9px;top:120px;width:1px;height:7px;background:#bdbdbd"></div>
<div class="t" style="left:1455.4px;top:110px;width:80px;text-align:center;font-size:10px;line-height:10px;color:#c4c4c4">1050</div>
<div class="a" style="left:1507.1px;top:123px;width:1px;height:4px;background:#bdbdbd"></div>
<div class="a" style="left:1519.3px;top:123px;width:1px;height:4px;background:#bdbdbd"></div>
<div class="a" style="left:1531.5px;top:123px;width:1px;height:4px;background:#bdbdbd"></div>
<div class="a" style="left:1543.7px;top:123px;width:1px;height:4px;background:#bdbdbd"></div>
<div class="a" style="left:1555.9px;top:120px;width:1px;height:7px;background:#bdbdbd"></div>
<div class="t" style="left:1516.4px;top:110px;width:80px;text-align:center;font-size:10px;line-height:10px;color:#c4c4c4">1200</div>
<div class="a" style="left:1568.1px;top:123px;width:1px;height:4px;background:#bdbdbd"></div>
<div class="a" style="left:1580.3px;top:123px;width:1px;height:4px;background:#bdbdbd"></div>
<div class="a" style="left:546px;top:138.3px;width:4px;height:1px;background:#bdbdbd"></div>
<div class="a" style="left:546px;top:150.5px;width:4px;height:1px;background:#bdbdbd"></div>
<div class="a" style="left:546px;top:162.7px;width:4px;height:1px;background:#bdbdbd"></div>
<div class="a" style="left:543px;top:174.9px;width:7px;height:1px;background:#bdbdbd"></div>
<div class="t" style="left:498px;top:170.4px;width:80px;text-align:center;font-size:10px;line-height:10px;color:#c4c4c4;transform:rotate(-90deg)">450</div>
<div class="a" style="left:546px;top:187.1px;width:4px;height:1px;background:#bdbdbd"></div>
<div class="a" style="left:546px;top:199.3px;width:4px;height:1px;background:#bdbdbd"></div>
<div class="a" style="left:546px;top:211.5px;width:4px;height:1px;background:#bdbdbd"></div>
<div class="a" style="left:546px;top:223.7px;width:4px;height:1px;background:#bdbdbd"></div>
<div class="a" style="left:543px;top:235.9px;width:7px;height:1px;background:#bdbdbd"></div>
<div class="t" style="left:498px;top:231.4px;width:80px;text-align:center;font-size:10px;line-height:10px;color:#c4c4c4;transform:rotate(-90deg)">300</div>
<div class="a" style="left:546px;top:248.1px;width:4px;height:1px;background:#bdbdbd"></div>
<div class="a" style="left:546px;top:260.3px;width:4px;height:1px;background:#bdbdbd"></div>
<div class="a" style="left:546px;top:272.5px;width:4px;height:1px;background:#bdbdbd"></div>
<div class="a" style="left:546px;top:284.7px;width:4px;height:1px;background:#bdbdbd"></div>
<div class="a" style="left:543px;top:296.9px;width:7px;height:1px;background:#bdbdbd"></div>
<div class="t" style="left:498px;top:292.4px;width:80px;text-align:center;font-size:10px;line-height:10px;color:#c4c4c4;transform:rotate(-90deg)">150</div>
<div class="a" style="left:546px;top:309.1px;width:4px;height:1px;background:#bdbdbd"></div>
<div class="a" style="left:546px;top:321.3px;width:4px;height:1px;background:#bdbdbd"></div>
<div class="a" style="left:546px;top:333.5px;width:4px;height:1px;background:#bdbdbd"></div>
<div class="a" style="left:546px;top:345.7px;width:4px;height:1px;background:#bdbdbd"></div>
<div class="a" style="left:543px;top:357.9px;width:7px;height:1px;background:#bdbdbd"></div>
<div class="t" style="left:498px;top:353.4px;width:80px;text-align:center;font-size:10px;line-height:10px;color:#c4c4c4;transform:rotate(-90deg)">0</div>
<div class="a" style="left:546px;top:370.1px;width:4px;height:1px;background:#bdbdbd"></div>
<div class="a" style="left:546px;top:382.3px;width:4px;height:1px;background:#bdbdbd"></div>
<div class="a" style="left:546px;top:394.5px;width:4px;height:1px;background:#bdbdbd"></div>
<div class="a" style="left:546px;top:406.7px;width:4px;height:1px;background:#bdbdbd"></div>
<div class="a" style="left:543px;top:418.9px;width:7px;height:1px;background:#bdbdbd"></div>
<div class="t" style="left:498px;top:414.4px;width:80px;text-align:center;font-size:10px;line-height:10px;color:#c4c4c4;transform:rotate(-90deg)">-150</div>
<div class="a" style="left:546px;top:431.1px;width:4px;height:1px;background:#bdbdbd"></div>
<div class="a" style="left:546px;top:443.3px;width:4px;height:1px;background:#bdbdbd"></div>
<div class="a" style="left:546px;top:455.5px;width:4px;height:1px;background:#bdbdbd"></div>
<div class="a" style="left:546px;top:467.7px;width:4px;height:1px;background:#bdbdbd"></div>
<div class="a" style="left:543px;top:479.9px;width:7px;height:1px;background:#bdbdbd"></div>
<div class="t" style="left:498px;top:475.4px;width:80px;text-align:center;font-size:10px;line-height:10px;color:#c4c4c4;transform:rotate(-90deg)">-300</div>
<div class="a" style="left:546px;top:492.1px;width:4px;height:1px;background:#bdbdbd"></div>
<div class="a" style="left:546px;top:504.3px;width:4px;height:1px;background:#bdbdbd"></div>
<div class="a" style="left:546px;top:516.5px;width:4px;height:1px;background:#bdbdbd"></div>
<div class="a" style="left:546px;top:528.7px;width:4px;height:1px;background:#bdbdbd"></div>
<div class="a" style="left:543px;top:540.9px;width:7px;height:1px;background:#bdbdbd"></div>
<div class="t" style="left:498px;top:536.4px;width:80px;text-align:center;font-size:10px;line-height:10px;color:#c4c4c4;transform:rotate(-90deg)">-450</div>
<div class="a" style="left:546px;top:553.1px;width:4px;height:1px;background:#bdbdbd"></div>
<div class="a" style="left:546px;top:565.3px;width:4px;height:1px;background:#bdbdbd"></div>
<div class="a" style="left:546px;top:577.5px;width:4px;height:1px;background:#bdbdbd"></div>
<div class="a" style="left:677px;top:139px;width:782px;height:440px;background:#fff"></div>
<div class="t" style="left:570px;top:495px;font-size:11.5px;line-height:11px;color:#f2f2f2">Hold S <span style="color:rgba(150,150,150,.55)">Direct Layer Selection</span></div>
<div class="t" style="left:570px;top:509px;font-size:11.5px;line-height:11px;color:#f2f2f2">Space <span style="color:rgba(150,150,150,.55)">Play/ Stop</span></div>
<div class="t" style="left:570px;top:523px;font-size:11.5px;line-height:11px;color:#f2f2f2">Space + click + drag <span style="color:rgba(150,150,150,.55)">Pan</span></div>
<div class="t" style="left:570px;top:537px;font-size:11.5px;line-height:11px;color:#f2f2f2">Alt + click + drag <span style="color:rgba(150,150,150,.55)">Move Pivot Point</span></div>
<div class="t" style="left:570px;top:551px;font-size:11.5px;line-height:11px;color:#f2f2f2">Shift <span style="color:rgba(150,150,150,.55)">Enable Snapping</span></div>
<div class="t" style="left:998px;top:571px;color:#111;font-size:12.2px;text-shadow:1px 0 0 #fff,-1px 0 0 #fff,0 1px 0 #fff,0 -1px 0 #fff">Viewport Quality: High</div>
<div class="a" style="left:1072px;top:349px;width:9px;height:9px;background:#b08cff"></div>
<div class="t" style="left:1085px;top:349px;color:#111">Cursor</div>
<svg style="left:1062px;top:354px" width="11" height="10"><circle cx="5.8" cy="4.8" r="4" fill="none" stroke="#555" stroke-width="1"/><circle cx="5.8" cy="4.8" r=".9" fill="#222"/></svg>
<svg style="left:1068px;top:363px" width="16" height="56"><g fill="none" stroke="#52d58d" stroke-width="1"><rect x="1.5" y="1.5" width="6.5" height="6.5"/><rect x="8" y="1.5" width="6.5" height="6.5"/><rect x="1.5" y="47.5" width="6.5" height="6.5"/><rect x="8" y="47.5" width="6.5" height="6.5"/><path d="M4.5 8V47.5M11.2 8V47.5"/></g></svg>
<div class="a" style="left:535px;top:594px;width:78px;height:16px;background:#2b2b2b;border-radius:3px"></div>
<div class="t" style="left:539px;top:597px">41%</div>
<svg style="left:599px;top:600px" width="9" height="6"><path d="M.5 .5L4.5 4.5L8.5 .5" fill="none" stroke="#bbb" stroke-width="1"/></svg>
<div class="a" style="left:866px;top:592px;width:100px;height:20px;background:#2b2b2b;border:1px solid #1f1f1f;border-radius:4px"></div>
<div class="a" style="left:886px;top:593px;width:1px;height:18px;background:#1f1f1f"></div>
<div class="a" style="left:906px;top:593px;width:1px;height:18px;background:#1f1f1f"></div>
<div class="a" style="left:926px;top:593px;width:1px;height:18px;background:#1f1f1f"></div>
<div class="a" style="left:946px;top:593px;width:1px;height:18px;background:#1f1f1f"></div>
<svg style="left:866px;top:592px" width="100" height="20"><g fill="#d0d0d0"><rect x="5" y="5" width="2" height="10"/><path d="M8 10L15 5V15Z"/><path d="M24 10L31 5V15Z"/><rect x="32" y="5" width="2" height="10"/><path d="M47 5L54 10L47 15Z"/><rect x="66" y="5" width="2" height="10"/><path d="M69 5L76 10L69 15Z"/><path d="M85 5L92 10L85 15Z"/><rect x="93" y="5" width="2" height="10"/></g></svg>
<div class="a" style="left:971px;top:592px;width:20px;height:20px;background:#2b2b2b;border:1px solid #1f1f1f;border-radius:4px"></div>
<svg style="left:974px;top:596px" width="15" height="12"><path d="M6 3.5H1.5V10.5H13V5" fill="none" stroke="#d0d0d0" stroke-width="1.2"/><path d="M8 0.5L14 4L8 7.5Z" fill="#d0d0d0"/></svg>
<div class="a" style="left:1232px;top:593px;width:37px;height:18px;background:#262626;border:1px solid #222;border-radius:4px"></div>
<svg style="left:1233px;top:597px" width="14" height="9"><path d="M0 4.5L3.5 0H13.5V9H3.5Z" fill="#d0d0d0"/><circle cx="4.5" cy="4.5" r="1.3" fill="#262626"/></svg>
<div class="t" style="left:1258px;top:597px;color:#bbb">0</div>
<div class="a" style="left:1272px;top:593px;width:31px;height:18px;background:#2b2b2b;border:1px solid #222;border-radius:4px"></div><div class="a" style="left:1291px;top:594px;width:1px;height:16px;background:#222"></div><svg style="left:1294px;top:598px" width="7" height="8"><path d="M.8 .8V7.2L6.2 4Z" fill="none" stroke="#999" stroke-width="1"/></svg>
<svg style="left:1276px;top:595px" width="14" height="14"><path d="M1 5H4L8 1.5V12.5L4 9H1Z" fill="#2ecc71"/><path d="M9.5 4.5Q11 7 9.5 9.5M11 2.5Q13.5 7 11 11.5" fill="none" stroke="#2ecc71" stroke-width="1.2"/></svg>
<div class="a" style="left:1307px;top:593px;width:31px;height:18px;background:#3a3a3a;border:1px solid #222;border-radius:4px"></div><div class="a" style="left:1326px;top:594px;width:1px;height:16px;background:#222"></div><svg style="left:1329px;top:598px" width="7" height="8"><path d="M.8 .8V7.2L6.2 4Z" fill="none" stroke="#999" stroke-width="1"/></svg>
<svg style="left:1309px;top:595px" width="15" height="15"><path d="M5.5 11.5L3.2 8A4 4 0 0 1 10 4L12.3 7.5" fill="none" stroke="#d0d0d0" stroke-width="2.1" stroke-linecap="round" transform="rotate(-8 7.5 7.5)"/></svg>
<div class="a" style="left:1342px;top:593px;width:31px;height:18px;background:#3a3a3a;border:1px solid #222;border-radius:4px"></div><div class="a" style="left:1361px;top:594px;width:1px;height:16px;background:#222"></div><svg style="left:1364px;top:598px" width="7" height="8"><path d="M.8 .8V7.2L6.2 4Z" fill="none" stroke="#999" stroke-width="1"/></svg>
<svg style="left:1345px;top:595px" width="14" height="14"><path d="M4.5 1V13M9.5 1V13M1 4.5H13M1 9.5H13" stroke="#e0e0e0" stroke-width="1.2"/></svg>
<div class="a" style="left:1377px;top:593px;width:20px;height:18px;background:#2b2b2b;border:1px solid #222;border-radius:4px"></div>
<svg style="left:1380px;top:597px" width="15" height="10"><g fill="#2ecc71"><rect x="0" y="0" width="3" height="2"/><rect x="0" y="3.5" width="3" height="6.5"/><rect x="4" y="6.5" width="11" height="3.5"/></g><rect x="4.8" y=".8" width="9.4" height="4.5" fill="none" stroke="#2ecc71" stroke-width="1.5"/></svg>
<div class="a" style="left:1400px;top:593px;width:20px;height:18px;background:#2b2b2b;border:1px solid #222;border-radius:4px"></div>
<svg style="left:1403px;top:597px" width="14" height="10"><path d="M.5 .5L4.5 5L.5 9.5H3L7 5L3 .5ZM5 .5L9 5L5 9.5H7.5L11.5 5L7.5 .5ZM9.5 .5L13.5 5L9.5 9.5" fill="#d0d0d0"/></svg>
<div class="a" style="left:1423px;top:593px;width:31px;height:18px;background:#3a3a3a;border:1px solid #222;border-radius:4px"></div><div class="a" style="left:1442px;top:594px;width:1px;height:16px;background:#222"></div><svg style="left:1445px;top:598px" width="7" height="8"><path d="M.8 .8V7.2L6.2 4Z" fill="none" stroke="#999" stroke-width="1"/></svg>
<svg style="left:1426px;top:596px" width="15" height="12"><rect x=".8" y=".8" width="13.4" height="10.4" fill="#444" stroke="#d8d8d8" stroke-width="1.3"/><rect x=".8" y="9" width="13.4" height="2.2" fill="#d8d8d8"/></svg>
<div class="a" style="left:1458px;top:593px;width:31px;height:18px;background:#3a3a3a;border:1px solid #222;border-radius:4px"></div><div class="a" style="left:1477px;top:594px;width:1px;height:16px;background:#222"></div><svg style="left:1480px;top:598px" width="7" height="8"><path d="M.8 .8V7.2L6.2 4Z" fill="none" stroke="#999" stroke-width="1"/></svg>
<svg style="left:1460px;top:596px" width="15" height="13"><rect x=".8" y=".8" width="7.5" height="5" fill="none" stroke="#d8d8d8" stroke-width="1"/><path d="M9.5 2.5V7.5H3M11.5 4.5V9.5H5M13.5 6.5V11.5H7" fill="none" stroke="#bcbcbc" stroke-width=".9"/></svg>
<div class="a" style="left:1493px;top:593px;width:31px;height:18px;background:#3a3a3a;border:1px solid #222;border-radius:4px"></div><div class="a" style="left:1512px;top:594px;width:1px;height:16px;background:#222"></div><svg style="left:1515px;top:598px" width="7" height="8"><path d="M.8 .8V7.2L6.2 4Z" fill="none" stroke="#999" stroke-width="1"/></svg>
<svg style="left:1496px;top:595px" width="14" height="14"><rect x="0" y="0" width="8.5" height="8.5" fill="#d0d0d0"/><rect x="5" y="5" width="8" height="8" fill="#3a3a3a" stroke="#e8e8e8" stroke-width="1.1"/></svg>
<div class="a" style="left:1528px;top:593px;width:31px;height:18px;background:#2b2b2b;border:1px solid #222;border-radius:4px"></div><div class="a" style="left:1547px;top:594px;width:1px;height:16px;background:#222"></div><svg style="left:1550px;top:598px" width="7" height="8"><path d="M.8 .8V7.2L6.2 4Z" fill="none" stroke="#999" stroke-width="1"/></svg>
<svg style="left:1531px;top:595px" width="13" height="13"><g fill="#2ecc71"><rect x="0" y="0" width="3" height="3"/><rect x="8" y="0" width="3" height="3"/><rect x="4" y="3.2" width="3" height="3"/><rect x="10.5" y="3.2" width="2.5" height="3"/><rect x="0" y="6.5" width="3" height="3"/><rect x="7" y="6.5" width="3" height="3"/><rect x="3.5" y="9.8" width="3" height="3"/><rect x="10" y="9.8" width="3" height="3"/></g></svg>
<div class="a" style="left:1563px;top:593px;width:20px;height:18px;background:#2b2b2b;border:1px solid #222;border-radius:4px"></div>
<svg style="left:1566px;top:595px" width="14" height="14"><g transform="translate(7 7)"><circle r="4.6" fill="#e0e0e0"/><g fill="#e0e0e0"><rect x="-1.4" y="-7" width="2.8" height="14"/><rect x="-1.4" y="-7" width="2.8" height="14" transform="rotate(45)"/><rect x="-1.4" y="-7" width="2.8" height="14" transform="rotate(90)"/><rect x="-1.4" y="-7" width="2.8" height="14" transform="rotate(135)"/></g><circle r="2.3" fill="#2b2b2b"/></g></svg>
<!-- ============ RIGHT: COLOR ============ -->
<div class="a" style="left:1587px;top:85px;width:6px;height:528px;background:#1a1a1a"></div>
<div class="a" style="left:1593px;top:85px;width:321px;height:22px;background:#1c1c1c"></div>
<div class="a" style="left:1914px;top:43px;width:6px;height:986px;background:#1f1f1f"></div>
<div class="tab" style="left:1593px;top:85px;width:40px;height:22px;background:#494949"></div>
<div class="t" style="left:1598px;top:91px">Color</div>
<div class="tab" style="left:1634px;top:85px;width:68px;height:22px;background:#2e2e2e"></div>
<div class="t" style="left:1639px;top:91px">Add Layers</div>
<div class="a" style="left:1593px;top:107px;width:307px;height:410px;background:#454545"></div>
<div class="a" style="left:1900px;top:107px;width:14px;height:410px;background:#2d2d2d"></div>
<div class="a" style="left:1902px;top:108px;width:10px;height:356px;background:#505050;border-radius:5px"></div>
<!-- wheel -->
<div class="a" style="left:1646px;top:120px;width:200px;height:200px;border-radius:50%;background:conic-gradient(from 0deg,hsl(90,100%,50%),hsl(60,100%,50%) 30deg,hsl(30,100%,50%) 60deg,hsl(0,100%,50%) 90deg,hsl(330,100%,50%) 120deg,hsl(300,100%,50%) 150deg,hsl(270,100%,50%) 180deg,hsl(240,100%,50%) 210deg,hsl(210,100%,50%) 240deg,hsl(180,100%,50%) 270deg,hsl(150,100%,50%) 300deg,hsl(120,100%,50%) 330deg,hsl(90,100%,50%) 360deg)"></div>
<div class="a" style="left:1671px;top:145px;width:150px;height:150px;border-radius:50%;background:#454545"></div>
<div class="a" style="left:1702px;top:176px;width:90px;height:90px;background:linear-gradient(to right,#000,rgba(0,0,0,0)),linear-gradient(to bottom,#fff,#f00)"></div>
<div class="a" style="left:1738px;top:169px;width:14px;height:14px;border:1.3px solid #ddd;border-radius:50%;box-shadow:0 0 0 1px rgba(0,0,0,.5)"></div>
<div class="a" style="left:1826px;top:213px;width:14px;height:14px;border:1.3px solid #fff;border-radius:50%"></div>
<!-- gray row -->
<div class="a" style="left:1600px;top:333px;width:22px;height:22px;background:#7a7a7a;border-radius:3px"></div>
<div class="t" style="left:1625px;top:339px">Gray</div>
<div class="btn" style="left:1871px;top:333px;width:22px;height:22px;background:#2e2e2e"></div>
<svg style="left:1876px;top:338px" width="12" height="12"><path d="M1.5 10.5L7 5" stroke="#ccc" stroke-width="2" stroke-linecap="round"/><path d="M2 10L6.8 5.2" stroke="#2e2e2e" stroke-width=".7"/><circle cx="9" cy="3" r="2.2" fill="#ddd"/><path d="M6 4.5L7.5 6" stroke="#ddd" stroke-width="2.2"/></svg>
<div class="a" style="left:1600px;top:360px;width:50px;height:19px;background:#3f3f3f;border:1px solid #2b2b2b;border-radius:2px"></div>
<div class="t" style="left:1603px;top:364px">Hex</div>
<svg style="left:1637px;top:367px" width="9" height="6"><path d="M.5 .5L4.5 4.5L8.5 .5" fill="none" stroke="#bbb" stroke-width="1"/></svg>
<div class="fld" style="left:1653px;top:358px;width:240px;height:21px;background:#2b2b2b"></div>
<div class="t" style="left:1658px;top:364px;color:#5e5e5e">#</div>
<div class="t" style="left:1670px;top:364px">7a7a7a</div>
<div class="a" style="left:1600px;top:390px;width:234px;height:4px;background:#dcdcdc;border-radius:2px"></div>
<div class="a" style="left:1828px;top:386px;width:12px;height:12px;background:#66c2a5;border-radius:50%"></div>
<div class="a" style="left:1832px;top:390px;width:4px;height:4px;background:#4f9c86;border-radius:50%"></div>
<div class="fld" style="left:1849px;top:384px;width:44px;height:16px;background:#2b2b2b"></div>
<div class="t" style="left:1853px;top:387px;color:#5e5e5e">A</div>
<div class="t" style="left:1866px;top:387px">255</div>
<!-- swatches/generator -->
<div class="a" style="left:1597px;top:407px;width:299px;height:21px;background:#252525;border:1px solid #1e1e1e"></div>
<div class="a" style="left:1598px;top:408px;width:149px;height:19px;background:#474747;border-radius:3px 3px 0 0"></div>
<div class="t" style="left:1647px;top:412px">Swatches</div>
<div class="t" style="left:1793px;top:412px;color:#c8c8c8">Generator</div>
<div class="a" style="left:1597px;top:430px;width:299px;height:20px;background:#454545"></div>
<div class="a" style="left:1598px;top:431px;width:256px;height:18px;background:#555;border-radius:3px"></div>
<div class="a" style="left:1599px;top:432px;width:62px;height:16px;background:#2b2b2b;border-radius:3px"></div>
<svg style="left:1604px;top:435px" width="13" height="10"><path d="M1 .5V9.5M4 .5V9.5" stroke="#2ecc71" stroke-width="1.6"/><path d="M7 .8L11.5 9.2" stroke="#2ecc71" stroke-width="1.6"/></svg>
<div class="t" style="left:1621px;top:435px">Library</div>
<svg style="left:1671px;top:435px" width="11" height="10"><path d="M.5 .5H4L5 1.8H10.5V9.5H.5Z" fill="#d0d0d0"/><g fill="#555"><rect x="2" y="3.5" width="1.5" height="1"/><rect x="4.5" y="3.5" width="4.5" height="1"/><rect x="2" y="5.5" width="1.5" height="1"/><rect x="4.5" y="5.5" width="4.5" height="1"/><rect x="2" y="7.5" width="1.5" height="1"/><rect x="4.5" y="7.5" width="4.5" height="1"/></g></svg>
<div class="t" style="left:1686px;top:435px">Project</div>
<svg style="left:1739px;top:434px" width="10" height="12"><path d="M.8 .8H6L9.2 4V11.2H.8Z" fill="none" stroke="#d0d0d0" stroke-width="1.1"/></svg>
<div class="t" style="left:1752px;top:435px">Scene</div>
<svg style="left:1801px;top:434px" width="11" height="11"><path d="M.8 1.5Q.8 .8 1.5 .8H9.5Q10.2 .8 10.2 1.5V6L6 10.2H1.5Q.8 10.2 .8 9.5Z" fill="none" stroke="#d0d0d0" stroke-width="1.1"/></svg>
<div class="t" style="left:1816px;top:435px">Labels</div>
<div class="a" style="left:1858px;top:431px;width:37px;height:18px;background:#555;border-radius:3px"></div>
<div class="a" style="left:1859px;top:432px;width:16px;height:16px;background:#2b2b2b;border-radius:3px"></div>
<svg style="left:1862px;top:435px" width="10" height="10"><g fill="#2ecc71"><rect x="0" y="0" width="3.5" height="3.5"/><rect x="5.5" y="0" width="3.5" height="3.5"/><rect x="0" y="5.5" width="3.5" height="3.5"/><rect x="5.5" y="5.5" width="3.5" height="3.5"/></g></svg>
<svg style="left:1880px;top:435px" width="12" height="10"><path d="M.5 1H11.5M.5 4.7H11.5M.5 8.5H11.5" stroke="#ddd" stroke-width="1.1"/></svg>
<div class="a" style="left:1598px;top:453px;width:276px;height:16px;background:#4b4b4b;border-radius:3px"></div>
<div class="t" style="left:1601px;top:456px">Bright</div>
<svg style="left:1861px;top:459px" width="9" height="6"><path d="M.5 .5L4.5 4.5L8.5 .5" fill="none" stroke="#bbb" stroke-width="1"/></svg>
<div class="a" style="left:1880px;top:460px;width:2px;height:2px;background:#ddd;box-shadow:5px 0 #ddd,10px 0 #ddd"></div>
<div class="a" style="left:1597px;top:470px;width:298px;height:47px;background:#2b2b2b"></div>
<div class="a" style="left:1895px;top:470px;width:5px;height:47px;background:#454545"></div>
<div class="a" style="left:1600px;top:472px;width:18px;height:18px;background:#a05cc2;border-radius:3px"></div>
<div class="a" style="left:1622px;top:472px;width:18px;height:18px;background:#0ac3ed;border-radius:3px"></div>
<div class="a" style="left:1644px;top:472px;width:18px;height:18px;background:#f6e000;border-radius:3px"></div>
<div class="a" style="left:1666px;top:472px;width:18px;height:18px;background:#f27700;border-radius:3px"></div>
<div class="a" style="left:1688px;top:472px;width:18px;height:18px;background:#ee1111;border-radius:3px"></div>
<div class="a" style="left:1593px;top:517px;width:321px;height:6px;background:#141414"></div>
<!-- ============ RIGHT: ALIGN ============ -->
<div class="a" style="left:1593px;top:523px;width:321px;height:22px;background:#1c1c1c"></div>
<div class="tab" style="left:1593px;top:523px;width:38px;height:22px;background:#494949"></div>
<div class="t" style="left:1599px;top:529px">Align</div>
<div class="a" style="left:1593px;top:545px;width:321px;height:68px;background:#494949"></div>
<div class="t" style="left:1601px;top:559px">Alignment</div>
<div class="t" style="left:1601px;top:587px">Distribution</div>
<div class="a" style="left:1790px;top:555px;width:54px;height:18px;background:#2b2b2b;border:1px solid #1e1e1e;border-radius:4px"></div>
<div class="a" style="left:1852px;top:555px;width:54px;height:18px;background:#2b2b2b;border:1px solid #1e1e1e;border-radius:4px"></div>
<div class="a" style="left:1790px;top:584px;width:54px;height:17px;background:#2b2b2b;border:1px solid #1e1e1e;border-radius:4px"></div>
<svg style="left:1790px;top:555px" width="54" height="18"><g stroke="#1e1e1e"><path d="M18 1V17M36 1V17"/></g><g fill="#ddd"><rect x="3" y="3" width="1" height="12"/><rect x="5" y="5.5" width="5" height="2"/><rect x="5" y="10" width="9" height="2"/><rect x="26.5" y="3" width="1" height="12"/><rect x="22" y="5.5" width="10" height="2"/><rect x="21" y="10" width="12" height="2"/><rect x="50" y="3" width="1" height="12"/><rect x="44" y="5.5" width="5" height="2"/><rect x="40" y="10" width="9" height="2"/></g></svg>
<svg style="left:1852px;top:555px" width="54" height="18"><g stroke="#1e1e1e"><path d="M18 1V17M36 1V17"/></g><g fill="#ddd"><rect x="2" y="2" width="14" height="1"/><rect x="5" y="4" width="2" height="9"/><rect x="9" y="4" width="2" height="4"/><rect x="20" y="8.5" width="14" height="1"/><rect x="23" y="4" width="2" height="10"/><rect x="28" y="6" width="2" height="6"/><rect x="38" y="15" width="14" height="1"/><rect x="42" y="9" width="2" height="5"/><rect x="46" y="4" width="2" height="10"/></g></svg>
<svg style="left:1790px;top:584px" width="54" height="17"><g stroke="#1e1e1e"><path d="M18 1V16M36 1V16"/></g><g fill="#ddd"><rect x="3" y="2" width="1" height="13"/><rect x="14" y="2" width="1" height="13"/><rect x="7.5" y="4.5" width="2" height="8"/><rect x="20" y="2" width="13" height="1"/><rect x="20" y="14" width="13" height="1"/><rect x="22" y="7.5" width="9" height="2"/><rect x="40" y="8" width="2" height="5"/><rect x="45" y="5" width="2" height="5"/></g><path d="M39 2H42M49 2H52V5M52 12V15H49M42 15H39V12" fill="none" stroke="#ddd" stroke-width="1"/></svg>
<div class="a" style="left:1593px;top:613px;width:321px;height:6px;background:#141414"></div>

<!-- ============ SCENE WINDOW ============ -->
<div class="a" style="left:488px;top:613px;width:1432px;height:6px;background:#141414"></div>
<div class="a" style="left:488px;top:613px;width:6px;height:416px;background:#1e1e1e"></div>
<div class="a" style="left:494px;top:619px;width:1420px;height:22px;background:#1c1c1c"></div>
<div class="tab" style="left:494px;top:619px;width:89px;height:22px;background:#3b3b3b"></div>
<div class="t" style="left:499px;top:625px">Scene Window</div>
<div class="tab" style="left:584px;top:619px;width:100px;height:22px;background:#2a2a2a"></div>
<div class="t" style="left:589px;top:625px">JavaScript Editor</div>
<div class="tab" style="left:685px;top:619px;width:112px;height:22px;background:#2a2a2a"></div>
<div class="t" style="left:690px;top:625px">Dependency Graph</div>
<div class="a" style="left:494px;top:641px;width:1420px;height:357px;background:#2b2b2b"></div>
<div class="a" style="left:494px;top:641px;width:458px;height:22px;background:#2a2a2a"></div>
<div class="t" style="left:665px;top:647px;color:#ababab">Jumping Text Coloring</div>
<svg style="left:950px;top:648px" width="10" height="10"><path d="M.5 .5L9.5 9.5M9.5 .5L.5 9.5" stroke="#bbb" stroke-width="1"/></svg>
<div class="a" style="left:969px;top:648px;width:1px;height:11px;background:#bbb"></div>
<div class="t" style="left:1093px;top:647px;width:200px;text-align:center;color:#ababab">Typing Text 01</div>
<svg style="left:1421px;top:648px" width="10" height="10"><path d="M.5 .5L9.5 9.5M9.5 .5L.5 9.5" stroke="#bbb" stroke-width="1"/></svg>
<div class="a" style="left:1439px;top:643px;width:469px;height:20px;background:#3b3b3b;border-radius:4px 4px 0 0"></div>
<div class="t" style="left:1563px;top:647px;width:200px;text-align:center;color:#e3e3e3">Typing Text 2</div>
<svg style="left:1891px;top:648px" width="10" height="10"><path d="M.5 .5L9.5 9.5M9.5 .5L.5 9.5" stroke="#bbb" stroke-width="1"/></svg>
<div class="a" style="left:494px;top:663px;width:458px;height:22px;background:#3b3b3b"></div>
<div class="a" style="left:496px;top:665px;width:248px;height:20px;background:#262626;border-radius:10px"></div>
<svg style="left:500px;top:668px" width="14" height="14"><circle cx="5.5" cy="5.5" r="4.3" fill="none" stroke="#ddd" stroke-width="1.3"/><path d="M8.7 8.7L12 12" stroke="#ddd" stroke-width="2"/></svg>
<div class="t ph" style="left:520px;top:670px">Enter a layer name</div>
<div class="btn" style="left:746px;top:666px;width:20px;height:19px;background:#2e2e2e"></div>
<svg style="left:750px;top:669px" width="14" height="14"><path d="M6 1V11M1 6H11" stroke="#e8e8e8" stroke-width="1.8"/><path d="M11 14L14 11V14Z" fill="#6ccfb0"/></svg>
<div class="btn" style="left:790px;top:666px;width:20px;height:19px;background:#2e2e2e"></div>
<svg style="left:792px;top:667px" width="16" height="16"><circle cx="11.1" cy="4.9" r="4.1" fill="#d4d4d4"/><g fill="none" stroke-width="1.3"><path d="M6.6 3.6A4.3 4.3 0 0 0 10.2 10" stroke="#9a9a9a"/><path d="M4.6 5.8A4.3 4.3 0 0 0 8.2 12.2" stroke="#707070"/><path d="M2.6 8A4.3 4.3 0 0 0 6.2 14.4" stroke="#555"/></g></svg>
<div class="btn" style="left:812px;top:666px;width:20px;height:19px;background:#2e2e2e"></div>
<svg style="left:814px;top:667px" width="18" height="18"><g fill="#d8d8d8"><circle cx="3.8" cy="3" r="1.2"/><circle cx="11" cy="4" r="1.2"/><circle cx="3.8" cy="9.9" r="1.2"/><path d="M9.8 6.8L10.7 10.2L14 11L10.7 11.8L9.8 15.2L8.9 11.8L5.6 11L8.9 10.2Z"/></g><path d="M14 17L17 14V17Z" fill="#6ccfb0"/></svg>
<div class="btn" style="left:834px;top:666px;width:19px;height:19px;background:#2e2e2e"></div>
<svg style="left:835px;top:667px" width="18" height="18"><g stroke="#d8d8d8" stroke-width="1.2" fill="none"><path d="M1.9 2.4H4M9.5 2.4H16M2 7.5H7.8M12.5 7.5H15M1.9 12.5H4M9.5 12.5H14"/><circle cx="6.9" cy="2.4" r="1.6"/><circle cx="11" cy="7.5" r="1.6"/><circle cx="6.9" cy="12.5" r="1.6"/></g><path d="M14.5 17L17.5 14V17Z" fill="#6ccfb0"/></svg>
<div class="a" style="left:854px;top:661px;width:101px;height:29px;border:3px solid #b5e61d"></div>
<div class="fld" style="left:857px;top:664px;width:93px;height:22px;background:#262626"></div>
<div class="t" style="left:861px;top:670px;color:#4c4c4c">F</div>
<div class="t" style="left:872px;top:670px">0</div>
<div class="a" style="left:494px;top:690px;width:458px;height:15px;background:#444"></div>
<div class="a" style="left:494px;top:685px;width:360px;height:5px;background:#444"></div>
<svg style="left:500px;top:689px" width="10" height="13"><path d="M2.5 6V4A2.5 2.5 0 0 1 7.5 4V6" fill="none" stroke="#ddd" stroke-width="1.4"/><rect x="1" y="6" width="8" height="6.5" fill="#ddd"/><circle cx="5" cy="9.5" r="1" fill="#444"/></svg>
<svg style="left:517px;top:691px" width="14" height="10"><path d="M.8 5Q7 -1.5 13.2 5Q7 11.5 .8 5Z" fill="none" stroke="#ddd" stroke-width="1"/><circle cx="7" cy="5" r="2.1" fill="#ddd"/></svg>
<svg style="left:537px;top:689px" width="13" height="14"><path d="M6.5 .8L12 3.5V10L6.5 13L1 10V3.5Z M1 3.5L6.5 6.5L12 3.5M6.5 6.5V13" fill="none" stroke="#ddd" stroke-width="1"/></svg>
<svg style="left:555px;top:689px" width="15" height="13"><path d="M1 4.5H4L8 1V12L4 8.5H1Z" fill="#ddd"/><path d="M10 3.5Q12 6.5 10 9.5M11.8 1.5Q15 6.5 11.8 11.5" fill="none" stroke="#ddd" stroke-width="1.1"/></svg>
<svg style="left:575px;top:689px" width="13" height="13"><path d="M1.5 11.5L8 5" stroke="#ccc" stroke-width="2.2" stroke-linecap="round"/><path d="M2 11L7.8 5.2" stroke="#444" stroke-width=".9"/><circle cx="10" cy="3" r="2.4" fill="#d6d6d6"/><path d="M6.5 4.5L8.5 6.5" stroke="#d6d6d6" stroke-width="2.5"/></svg>
<svg style="left:593px;top:691px" width="14" height="9"><path d="M0 4.5L3.5 0H14V9H3.5Z" fill="#d0d0d0"/><circle cx="4.8" cy="4.5" r="1.9" fill="#444"/></svg>
<div class="t" style="left:649px;top:691px">Name</div>
<div class="a" style="left:494px;top:705px;width:446px;height:132px;background:#353535"></div>
<div class="a" style="left:494px;top:837px;width:446px;height:127px;background:#2b2b2b"></div>
<div class="a" style="left:496px;top:794px;width:440px;height:20px;background:#474356"></div>
<div class="a" style="left:496px;top:707px;width:18px;height:17px;background:#282828;border-radius:3px"></div><div class="a" style="left:515px;top:707px;width:18px;height:17px;background:#282828;border-radius:3px"></div><div class="a" style="left:534px;top:707px;width:18px;height:17px;background:#282828;border-radius:3px"></div>
<svg style="left:517px;top:711px" width="14" height="10"><path d="M.8 5Q7 -1.5 13.2 5Q7 11.5 .8 5Z" fill="none" stroke="#ddd" stroke-width="1"/><circle cx="7" cy="5" r="2.1" fill="#ddd"/></svg>
<div class="a" style="left:573px;top:708px;width:16px;height:16px;background:#b98dfc;border-radius:3px;box-shadow:0 0 0 1px #151515"></div><svg style="left:593px;top:712px" width="14" height="9"><path d="M0 4.5L3.5 0H14V9H3.5Z" fill="#d0d0d0"/><circle cx="4.8" cy="4.5" r="1.9" fill="#353535"/></svg>
<div class="a" style="left:611px;top:707px;width:14px;height:17px;background:#2f2f2f;border-radius:3px"></div><svg style="left:614px;top:713px" width="9" height="6"><path d="M.5 .5L4.5 4.5L8.5 .5" fill="none" stroke="#999" stroke-width="1"/></svg><div class="a" style="left:626px;top:707px;width:16px;height:17px;background:#2f2f2f;border-radius:3px"></div>
<svg style="left:647px;top:708px" width="16" height="16"><rect x="1.5" y="1.5" width="13" height="13" fill="none" stroke="#d8d8d8" stroke-width="1"/><g fill="#eee"><rect x="0" y="0" width="3" height="3"/><rect x="13" y="0" width="3" height="3"/><rect x="0" y="13" width="3" height="3"/><rect x="13" y="13" width="3" height="3"/></g><path d="M4.5 4.5H11.5M8 4.5V12" stroke="#e6d36b" stroke-width="2"/></svg>
<div class="t" style="left:667px;top:711px">Main</div>
<div class="a" style="left:898px;top:707px;width:21px;height:17px;background:#2a2a2a;border-radius:3px"></div><div class="a" style="left:897px;top:707px;width:11px;height:17px;border:1px solid #b8a55c;border-radius:2px"></div><div class="a" style="left:908px;top:708px;width:1px;height:15px;background:#222"></div><svg style="left:899px;top:711px" width="19" height="9"><path d="M7.5 0.5V8.5H4.2L1 4.5L4.2 .5Z" fill="#d9c06a"/><path d="M11 0.5H14.3L17.5 4.5L14.3 8.5H11Z" fill="#888"/></svg><div class="a" style="left:924px;top:710px;width:10px;height:10px;border:1px solid #7a7a7a;border-radius:50%"></div>
<div class="a" style="left:496px;top:729px;width:18px;height:17px;background:#282828;border-radius:3px"></div><div class="a" style="left:515px;top:729px;width:18px;height:17px;background:#282828;border-radius:3px"></div>
<svg style="left:518px;top:731px" width="12" height="12"><path d="M10.5 4.5A5 5 0 1 1 8 1.5" fill="none" stroke="#ddd" stroke-width="1.1"/><path d="M3.5 6L5.8 8.3L11 2.5" fill="none" stroke="#ddd" stroke-width="1.3"/></svg>
<div class="a" style="left:573px;top:730px;width:16px;height:16px;background:#6a8fe6;border-radius:3px;box-shadow:0 0 0 1px #151515"></div><svg style="left:593px;top:734px" width="14" height="9"><path d="M0 4.5L3.5 0H14V9H3.5Z" fill="#d0d0d0"/><circle cx="4.8" cy="4.5" r="1.9" fill="#353535"/></svg>
<div class="a" style="left:630px;top:729px;width:14px;height:17px;background:#2f2f2f;border-radius:3px"></div><svg style="left:633px;top:735px" width="9" height="6"><path d="M.5 .5L4.5 4.5L8.5 .5" fill="none" stroke="#999" stroke-width="1"/></svg><div class="a" style="left:645px;top:729px;width:16px;height:17px;background:#2f2f2f;border-radius:3px"></div><div class="a" style="left:650px;top:735px;width:6px;height:6px;background:#ddd;border-radius:50%"></div>
<svg style="left:666px;top:730px" width="16" height="16"><path d="M2 5A7 7 0 0 1 14 5M2 11A7 7 0 0 0 14 11" fill="none" stroke="#ddd" stroke-width="1"/><text x="8" y="10.5" font-size="7.5" text-anchor="middle" fill="#8ec9f5" font-family="Liberation Sans">abc</text><path d="M1 9H15" stroke="#8ec9f5" stroke-width=".8"/></svg>
<div class="t" style="left:686px;top:733px">String Manipulator [Cavalry Typing Te...</div>
<div class="a" style="left:898px;top:729px;width:21px;height:17px;background:#2a2a2a;border-radius:3px"></div><div class="a" style="left:908px;top:730px;width:1px;height:15px;background:#222"></div><svg style="left:899px;top:733px" width="19" height="9"><path d="M7.5 0.5V8.5H4.2L1 4.5L4.2 .5Z" fill="#777"/><path d="M11 0.5H14.3L17.5 4.5L14.3 8.5H11Z" fill="#d04ee8"/></svg><div class="a" style="left:924px;top:732px;width:10px;height:10px;border:1px solid #7a7a7a;border-radius:50%"></div>
<div class="a" style="left:653px;top:749px;width:1px;height:11px;border-left:1px dotted #bbb"></div><div class="a" style="left:653px;top:759px;width:9px;height:1px;border-top:1px dotted #bbb"></div>
<div class="t" style="left:666px;top:755px;font-size:11.5px">Resize String.Percentage</div>
<div class="fld" style="left:840px;top:752px;width:84px;height:16px;background:#2b2b2b"></div>
<div class="t" style="left:844px;top:755px;color:#6a6a6a">%</div><div class="t" style="left:857px;top:755px">0.0</div>
<svg style="left:911px;top:755px" width="10" height="10"><path d="M5 .8L9.2 5L5 9.2L.8 5Z" fill="#2ecc71"/></svg>
<div class="a" style="left:924px;top:752px;width:11px;height:16px;background:#2e2e2e"></div><svg style="left:927px;top:756px" width="6" height="8"><path d="M0 .5H3L6 4L3 7.5H0Z" fill="#777"/></svg>
<div class="a" style="left:496px;top:773px;width:18px;height:17px;background:#282828;border-radius:3px"></div><div class="a" style="left:515px;top:773px;width:18px;height:17px;background:#282828;border-radius:3px"></div><div class="a" style="left:534px;top:773px;width:18px;height:17px;background:#282828;border-radius:3px"></div>
<div class="a" style="left:573px;top:774px;width:16px;height:16px;background:#b98dfc;border-radius:3px;box-shadow:0 0 0 1px #151515"></div><svg style="left:593px;top:778px" width="14" height="9"><path d="M0 4.5L3.5 0H14V9H3.5Z" fill="#d0d0d0"/><circle cx="4.8" cy="4.5" r="1.9" fill="#353535"/></svg>
<div class="a" style="left:630px;top:773px;width:14px;height:17px;background:#2f2f2f;border-radius:3px"></div><svg style="left:633px;top:779px" width="9" height="6"><path d="M.5 .5L4.5 4.5L8.5 .5" fill="none" stroke="#999" stroke-width="1"/></svg><div class="a" style="left:645px;top:773px;width:16px;height:17px;background:#2f2f2f;border-radius:3px"></div>
<svg style="left:666px;top:774px" width="16" height="16"><rect x="1.5" y="1.5" width="13" height="13" fill="none" stroke="#d8d8d8" stroke-width="1"/><g fill="#eee"><rect x="0" y="0" width="3" height="3"/><rect x="13" y="0" width="3" height="3"/><rect x="0" y="13" width="3" height="3"/><rect x="13" y="13" width="3" height="3"/></g><path d="M4.5 4.5H11.5M8 4.5V12" stroke="#e6d36b" stroke-width="2"/></svg>
<div class="t" style="left:686px;top:777px;color:#a9a9a9">Cavalry Typing Text</div>
<div class="a" style="left:898px;top:773px;width:21px;height:17px;background:#2a2a2a;border-radius:3px"></div><div class="a" style="left:908px;top:774px;width:1px;height:15px;background:#222"></div><svg style="left:899px;top:777px" width="19" height="9"><path d="M7.5 0.5V8.5H4.2L1 4.5L4.2 .5Z" fill="#d9c06a"/><path d="M11 0.5H14.3L17.5 4.5L14.3 8.5H11Z" fill="#d04ee8"/></svg><div class="a" style="left:924px;top:776px;width:10px;height:10px;border:1px solid #7a7a7a;border-radius:50%"></div>
<div class="a" style="left:496px;top:795px;width:18px;height:17px;background:#282828;border-radius:3px"></div><div class="a" style="left:515px;top:795px;width:18px;height:17px;background:#282828;border-radius:3px"></div><div class="a" style="left:534px;top:795px;width:18px;height:17px;background:#282828;border-radius:3px"></div>
<div class="a" style="left:573px;top:796px;width:16px;height:16px;background:#b98dfc;border-radius:3px;box-shadow:0 0 0 1px #151515"></div><svg style="left:593px;top:800px" width="14" height="9"><path d="M0 4.5L3.5 0H14V9H3.5Z" fill="#d0d0d0"/><circle cx="4.8" cy="4.5" r="1.9" fill="#474356"/></svg>
<div class="a" style="left:649px;top:795px;width:14px;height:17px;background:#2f2f2f;border-radius:3px"></div><svg style="left:652px;top:801px" width="9" height="6"><path d="M.5 .5L4.5 4.5L8.5 .5" fill="none" stroke="#999" stroke-width="1"/></svg><div class="a" style="left:664px;top:795px;width:16px;height:17px;background:#2c2c2c;border-radius:3px"></div><div class="a" style="left:669px;top:801px;width:6px;height:6px;background:#ddd;border-radius:50%"></div>
<svg style="left:685px;top:796px" width="16" height="16"><rect x="1.5" y="1.5" width="13" height="13" fill="none" stroke="#d8d8d8" stroke-width="1"/><g fill="#eee"><rect x="0" y="0" width="3" height="3"/><rect x="13" y="0" width="3" height="3"/><rect x="0" y="13" width="3" height="3"/><rect x="13" y="13" width="3" height="3"/></g><path d="M4.5 4.5H11.5M8 4.5V12" stroke="#e6d36b" stroke-width="2"/></svg>
<div class="t" style="left:705px;top:799px;color:#a0a0a0">Cursor</div>
<div class="a" style="left:898px;top:795px;width:21px;height:17px;background:#2a2a2a;border-radius:3px"></div><div class="a" style="left:908px;top:796px;width:1px;height:15px;background:#222"></div><svg style="left:899px;top:799px" width="19" height="9"><path d="M7.5 0.5V8.5H4.2L1 4.5L4.2 .5Z" fill="#777"/><path d="M11 0.5H14.3L17.5 4.5L14.3 8.5H11Z" fill="#d04ee8"/></svg><div class="a" style="left:924px;top:798px;width:10px;height:10px;border:1px solid #7a7a7a;border-radius:50%"></div>
<div class="a" style="left:672px;top:815px;width:1px;height:11px;border-left:1px dotted #bbb"></div><div class="a" style="left:672px;top:825px;width:9px;height:1px;border-top:1px dotted #bbb"></div>
<div class="t" style="left:685px;top:821px">Fill.Alpha</div>
<div class="a" style="left:834px;top:810px;width:105px;height:31px;border:3px solid #b5e61d"></div>
<div class="fld" style="left:840px;top:818px;width:84px;height:16px;background:#2b2b2b"></div>
<div class="t" style="left:844px;top:821px;color:#6a6a6a">%</div><div class="t" style="left:857px;top:821px">0.0</div>
<svg style="left:911px;top:821px" width="10" height="10"><path d="M5 .8L9.2 5L5 9.2L.8 5Z" fill="#2ecc71"/></svg>
<div class="a" style="left:924px;top:818px;width:11px;height:16px;background:#2e2e2e"></div><svg style="left:927px;top:822px" width="6" height="8"><path d="M0 .5H3L6 4L3 7.5H0Z" fill="#777"/></svg>
<div class="a" style="left:940px;top:705px;width:16px;height:257px;background:#2a2a2a"></div>
<div class="a" style="left:940px;top:707px;width:10px;height:254px;background:#505050;border-radius:5px"></div>
<div class="a" style="left:494px;top:962px;width:458px;height:14px;background:#2b2b2b"></div>
<div class="a" style="left:495px;top:964px;width:442px;height:10px;background:#505050;border-radius:5px"></div>
<div class="a" style="left:939px;top:962px;width:13px;height:14px;background:#262626"></div><div class="a" style="left:952px;top:962px;width:4px;height:36px;background:#2a2a2a"></div>
<div class="a" style="left:494px;top:976px;width:458px;height:22px;background:#3b3b3b"></div>
<div class="btn" style="left:497px;top:977px;width:19px;height:20px;background:#2e2e2e"></div>
<svg style="left:500px;top:983px" width="14" height="9"><path d="M0 4.5L3.5 0H14V9H3.5Z" fill="#d0d0d0"/><circle cx="4.8" cy="4.5" r="1.9" fill="#2e2e2e"/></svg>
<div class="t" style="left:520px;top:982px">1 selected</div>
<div class="btn" style="left:743px;top:977px;width:20px;height:20px;background:#2e2e2e"></div>
<div class="a" style="left:747px;top:981px;width:12px;height:12px;border:1.3px solid #ccc"></div><div class="a" style="left:751px;top:985px;width:4px;height:4px;background:#ccc;border-radius:50%"></div>
<div class="a" style="left:766px;top:978px;width:183px;height:18px;background:#555;border-radius:3px"></div>
<div class="a" style="left:767px;top:979px;width:86px;height:16px;background:#2a2a2a;border-radius:3px"></div>
<svg style="left:772px;top:981px" width="14" height="12"><path d="M3 1.5H13M1 5.5H10M3 9.5H12" stroke="#2ecc71" stroke-width="1.8"/></svg>
<div class="t" style="left:789px;top:982px">Time Editor</div>
<svg style="left:860px;top:981px" width="14" height="14"><path d="M3.2 .5V13M.5 10.5H13M3.2 10.5L12.5 3" fill="none" stroke="#d0d0d0" stroke-width=".9"/></svg>
<div class="t" style="left:878px;top:982px">Graph Editor</div>
<div class="a" style="left:952px;top:685px;width:4px;height:20px;background:#222"></div><div class="a" style="left:956px;top:663px;width:3px;height:335px;background:#1f1f1f"></div>
<div class="a" style="left:955px;top:825px;width:1px;height:10px;border-left:1px dotted #666"></div>
<div class="a" style="left:959px;top:663px;width:955px;height:24px;background:#282828"></div>
<div class="a" style="left:967.5px;top:679px;width:1px;height:8px;background:#bdbdbd"></div>
<div class="t" style="left:938.0px;top:666px;width:60px;text-align:center;font-size:12px;line-height:11px;color:#d0d0d0">0</div>
<div class="a" style="left:983.1px;top:683px;width:1px;height:4px;background:#bdbdbd"></div>
<div class="a" style="left:998.7px;top:683px;width:1px;height:4px;background:#bdbdbd"></div>
<div class="a" style="left:1014.3px;top:683px;width:1px;height:4px;background:#bdbdbd"></div>
<div class="a" style="left:1029.9px;top:683px;width:1px;height:4px;background:#bdbdbd"></div>
<div class="a" style="left:1045.5px;top:679px;width:1px;height:8px;background:#bdbdbd"></div>
<div class="t" style="left:1016.0px;top:666px;width:60px;text-align:center;font-size:12px;line-height:11px;color:#d0d0d0">10</div>
<div class="a" style="left:1061.1px;top:683px;width:1px;height:4px;background:#bdbdbd"></div>
<div class="a" style="left:1076.7px;top:683px;width:1px;height:4px;background:#bdbdbd"></div>
<div class="a" style="left:1092.3px;top:683px;width:1px;height:4px;background:#bdbdbd"></div>
<div class="a" style="left:1107.9px;top:683px;width:1px;height:4px;background:#bdbdbd"></div>
<div class="a" style="left:1123.5px;top:679px;width:1px;height:8px;background:#bdbdbd"></div>
<div class="t" style="left:1094.0px;top:666px;width:60px;text-align:center;font-size:12px;line-height:11px;color:#d0d0d0">20</div>
<div class="a" style="left:1139.1px;top:683px;width:1px;height:4px;background:#bdbdbd"></div>
<div class="a" style="left:1154.7px;top:683px;width:1px;height:4px;background:#bdbdbd"></div>
<div class="a" style="left:1170.3px;top:683px;width:1px;height:4px;background:#bdbdbd"></div>
<div class="a" style="left:1185.9px;top:683px;width:1px;height:4px;background:#bdbdbd"></div>
<div class="a" style="left:1201.5px;top:679px;width:1px;height:8px;background:#bdbdbd"></div>
<div class="t" style="left:1172.0px;top:666px;width:60px;text-align:center;font-size:12px;line-height:11px;color:#d0d0d0">30</div>
<div class="a" style="left:1217.1px;top:683px;width:1px;height:4px;background:#bdbdbd"></div>
<div class="a" style="left:1232.7px;top:683px;width:1px;height:4px;background:#bdbdbd"></div>
<div class="a" style="left:1248.3px;top:683px;width:1px;height:4px;background:#bdbdbd"></div>
<div class="a" style="left:1263.9px;top:683px;width:1px;height:4px;background:#bdbdbd"></div>
<div class="a" style="left:1279.5px;top:679px;width:1px;height:8px;background:#bdbdbd"></div>
<div class="t" style="left:1250.0px;top:666px;width:60px;text-align:center;font-size:12px;line-height:11px;color:#d0d0d0">40</div>
<div class="a" style="left:1295.1px;top:683px;width:1px;height:4px;background:#bdbdbd"></div>
<div class="a" style="left:1310.7px;top:683px;width:1px;height:4px;background:#bdbdbd"></div>
<div class="a" style="left:1326.3px;top:683px;width:1px;height:4px;background:#bdbdbd"></div>
<div class="a" style="left:1341.9px;top:683px;width:1px;height:4px;background:#bdbdbd"></div>
<div class="a" style="left:1357.5px;top:679px;width:1px;height:8px;background:#bdbdbd"></div>
<div class="t" style="left:1328.0px;top:666px;width:60px;text-align:center;font-size:12px;line-height:11px;color:#d0d0d0">50</div>
<div class="a" style="left:1373.1px;top:683px;width:1px;height:4px;background:#bdbdbd"></div>
<div class="a" style="left:1388.7px;top:683px;width:1px;height:4px;background:#bdbdbd"></div>
<div class="a" style="left:1404.3px;top:683px;width:1px;height:4px;background:#bdbdbd"></div>
<div class="a" style="left:1419.9px;top:683px;width:1px;height:4px;background:#bdbdbd"></div>
<div class="a" style="left:1435.5px;top:679px;width:1px;height:8px;background:#bdbdbd"></div>
<div class="t" style="left:1406.0px;top:666px;width:60px;text-align:center;font-size:12px;line-height:11px;color:#d0d0d0">60</div>
<div class="a" style="left:1451.1px;top:683px;width:1px;height:4px;background:#bdbdbd"></div>
<div class="a" style="left:1466.7px;top:683px;width:1px;height:4px;background:#bdbdbd"></div>
<div class="a" style="left:1482.3px;top:683px;width:1px;height:4px;background:#bdbdbd"></div>
<div class="a" style="left:1497.9px;top:683px;width:1px;height:4px;background:#bdbdbd"></div>
<div class="a" style="left:1513.5px;top:679px;width:1px;height:8px;background:#bdbdbd"></div>
<div class="t" style="left:1484.0px;top:666px;width:60px;text-align:center;font-size:12px;line-height:11px;color:#d0d0d0">70</div>
<div class="a" style="left:1529.1px;top:683px;width:1px;height:4px;background:#bdbdbd"></div>
<div class="a" style="left:1544.7px;top:683px;width:1px;height:4px;background:#bdbdbd"></div>
<div class="a" style="left:1560.3px;top:683px;width:1px;height:4px;background:#bdbdbd"></div>
<div class="a" style="left:1575.9px;top:683px;width:1px;height:4px;background:#bdbdbd"></div>
<div class="a" style="left:1591.5px;top:679px;width:1px;height:8px;background:#bdbdbd"></div>
<div class="t" style="left:1562.0px;top:666px;width:60px;text-align:center;font-size:12px;line-height:11px;color:#d0d0d0">80</div>
<div class="a" style="left:1607.1px;top:683px;width:1px;height:4px;background:#bdbdbd"></div>
<div class="a" style="left:1622.7px;top:683px;width:1px;height:4px;background:#bdbdbd"></div>
<div class="a" style="left:1638.3px;top:683px;width:1px;height:4px;background:#bdbdbd"></div>
<div class="a" style="left:1653.9px;top:683px;width:1px;height:4px;background:#bdbdbd"></div>
<div class="a" style="left:1669.5px;top:679px;width:1px;height:8px;background:#bdbdbd"></div>
<div class="t" style="left:1640.0px;top:666px;width:60px;text-align:center;font-size:12px;line-height:11px;color:#d0d0d0">90</div>
<div class="a" style="left:1685.1px;top:683px;width:1px;height:4px;background:#bdbdbd"></div>
<div class="a" style="left:1700.7px;top:683px;width:1px;height:4px;background:#bdbdbd"></div>
<div class="a" style="left:1716.3px;top:683px;width:1px;height:4px;background:#bdbdbd"></div>
<div class="a" style="left:1731.9px;top:683px;width:1px;height:4px;background:#bdbdbd"></div>
<div class="a" style="left:1747.5px;top:679px;width:1px;height:8px;background:#bdbdbd"></div>
<div class="t" style="left:1718.0px;top:666px;width:60px;text-align:center;font-size:12px;line-height:11px;color:#d0d0d0">100</div>
<div class="a" style="left:1763.1px;top:683px;width:1px;height:4px;background:#bdbdbd"></div>
<div class="a" style="left:1778.7px;top:683px;width:1px;height:4px;background:#bdbdbd"></div>
<div class="a" style="left:1794.3px;top:683px;width:1px;height:4px;background:#bdbdbd"></div>
<div class="a" style="left:1809.9px;top:683px;width:1px;height:4px;background:#bdbdbd"></div>
<div class="a" style="left:1825.5px;top:679px;width:1px;height:8px;background:#bdbdbd"></div>
<div class="t" style="left:1796.0px;top:666px;width:60px;text-align:center;font-size:12px;line-height:11px;color:#d0d0d0">110</div>
<div class="a" style="left:1841.1px;top:683px;width:1px;height:4px;background:#bdbdbd"></div>
<div class="a" style="left:1856.7px;top:683px;width:1px;height:4px;background:#bdbdbd"></div>
<div class="a" style="left:1872.3px;top:683px;width:1px;height:4px;background:#bdbdbd"></div>
<div class="a" style="left:1887.9px;top:683px;width:1px;height:4px;background:#bdbdbd"></div>
<div class="a" style="left:1903.5px;top:679px;width:1px;height:8px;background:#bdbdbd"></div>
<div class="t" style="left:1874.0px;top:666px;width:60px;text-align:center;font-size:12px;line-height:11px;color:#d0d0d0">120</div>
<div class="a" style="left:959px;top:687px;width:955px;height:17px;background:#474747"></div>
<div class="a" style="left:959px;top:687px;width:9px;height:17px;background:#1f1f1f"></div>
<div class="a" style="left:963px;top:687px;width:5px;height:17px;background:#6cc4ac"></div>
<div class="a" style="left:1905px;top:687px;width:5px;height:17px;background:#6cc4ac"></div>
<div class="a" style="left:959px;top:704px;width:955px;height:258px;background:#1f1f1f"></div>
<div class="a" style="left:968px;top:704px;width:946px;height:258px;background:#2a2a2a"></div>
<div class="a" style="left:968px;top:706px;width:946px;height:19px;background:#b48cf7;border-radius:3px 0 0 3px;"></div><div class="a" style="left:1905px;top:706px;width:9px;height:19px;background:rgba(0,0,0,.25)"></div><div class="t" style="left:976px;top:710px;color:#fff">Main</div>
<div class="a" style="left:968px;top:728px;width:946px;height:18px;background:repeating-linear-gradient(-45deg,#76a6fb 0 1.5px,#6895ea 1.5px 12.5px,#5a83d6 12.5px 25.3px);border-radius:3px 0 0 3px;"></div><div class="a" style="left:1905px;top:728px;width:9px;height:18px;background:rgba(0,0,0,.25)"></div><div class="t" style="left:976px;top:732px;color:#fff">String Manipulator [Cavalry Typing Text]</div>
<div class="a" style="left:968px;top:757px;width:468px;height:2px;background:#5b8dee"></div>
<svg style="left:963px;top:754px" width="10" height="10"><path d="M5 .5L9.5 5L5 9.5L.5 5Z" fill="#c8c8c8"/></svg>
<svg style="left:1431px;top:754px" width="10" height="10"><path d="M5 .5L9.5 5L5 9.5L.5 5Z" fill="#c8c8c8"/></svg>
<div class="a" style="left:968px;top:773px;width:946px;height:18px;background:#b48cf7;border-radius:3px 0 0 3px;"></div><div class="a" style="left:1905px;top:773px;width:9px;height:18px;background:rgba(0,0,0,.25)"></div><div class="t" style="left:976px;top:777px;color:#fff">Cavalry Typing Text</div>
<div class="a" style="left:968px;top:795px;width:946px;height:17px;background:repeating-linear-gradient(90deg,rgba(245,230,255,.8) 0 1px,transparent 1px 3px),repeating-linear-gradient(0deg,rgba(245,230,255,.8) 0 1px,transparent 1px 3px),#a47ee8;border-radius:3px 0 0 3px;"></div><div class="a" style="left:1905px;top:795px;width:9px;height:17px;background:rgba(0,0,0,.25)"></div><div class="t" style="left:976px;top:799px;color:#fff"><span style="color:rgba(255,255,255,.85)">Cursor</span></div>
<svg style="left:963px;top:819px" width="10" height="10"><path d="M5 .5L9.5 5L5 9.5L.5 5Z" fill="#c8c8c8"/></svg>
<div class="a" style="left:967px;top:686px;width:2px;height:276px;background:#4e8c7b"></div>
<svg style="left:960px;top:676px" width="16" height="10"><path d="M.5 .5H15.5L8 9.5Z" fill="#6cc4ac"/></svg>
<div class="a" style="left:959px;top:962px;width:955px;height:14px;background:#2b2b2b"></div>
<div class="a" style="left:986px;top:964px;width:840px;height:10px;background:#505050;border-radius:5px"></div>
<div class="a" style="left:959px;top:976px;width:955px;height:22px;background:#3b3b3b"></div>
<div class="btn" style="left:962px;top:977px;width:18px;height:20px;background:#2e2e2e"></div>
<svg style="left:964px;top:980px" width="15" height="14"><path d="M1 2.5H14" stroke="#e0e0e0" stroke-width="1.5"/><path d="M1 6.5H3M5 6.5H14" stroke="#e0e0e0" stroke-width="1.5"/><path d="M1 10.5H6M8 10.5H10" stroke="#e0e0e0" stroke-width="1.5"/><path d="M12 14L15 11V14Z" fill="#6ccfb0"/></svg>
<div class="fld" style="left:983px;top:979px;width:149px;height:16px;background:#2b2b2b"></div>
<div class="t" style="left:985px;top:982px">Default Keyframe Layer</div>
<div class="fld" style="left:1140px;top:979px;width:69px;height:16px;background:#2b2b2b"></div>
<div class="t" style="left:1144px;top:982px;color:#4c4c4c">F</div><div class="t" style="left:1156px;top:982px;color:#bbb">-</div>
<div class="t" style="left:1215px;top:982px">Align:</div>
<div class="a" style="left:1252px;top:978px;width:52px;height:18px;background:#2b2b2b;border:1px solid #1e1e1e;border-radius:3px"></div>
<svg style="left:1252px;top:978px" width="52" height="18"><g stroke="#1e1e1e"><path d="M17.5 1V17M34.5 1V17"/></g><g fill="#e0e0e0"><rect x="1.8" y="1.5" width="1" height="14"/><rect x="7.5" y="5.2" width="3" height="1.6"/><rect x="7.5" y="11" width="7" height="1.6"/><rect x="26" y="1.5" width="1" height="14"/><rect x="23" y="5.2" width="1" height="1.6"/><rect x="29" y="5.2" width="1" height="1.6"/><rect x="21" y="11" width="3" height="1.6"/><rect x="29" y="11" width="3" height="1.6"/><rect x="49" y="1.5" width="1" height="14"/><rect x="41" y="5.2" width="3" height="1.6"/><rect x="37" y="11" width="7" height="1.6"/></g><g fill="#6ccfb0"><rect x="4.8" y="5" width="2" height="2"/><rect x="4.8" y="10.8" width="2" height="2"/><rect x="25.5" y="5" width="2" height="2"/><rect x="25.5" y="10.8" width="2" height="2"/><rect x="45" y="5" width="2" height="2"/><rect x="45" y="10.8" width="2" height="2"/></g></svg>
<div class="btn" style="left:1309px;top:978px;width:18px;height:18px;background:#2b2b2b"></div>
<svg style="left:1310px;top:980px" width="16" height="15"><g fill="none" stroke="#bdbdbd" stroke-width=".9"><rect x="1" y="1" width="2.4" height="2.4"/><rect x="12" y="1" width="2.4" height="2.4"/><rect x="1" y="11.6" width="2.4" height="2.4"/><rect x="12" y="11.6" width="2.4" height="2.4"/></g><path d="M5 2.2H10.5M5 12.8H10.5M2.2 5V10M13.2 5V10" stroke="#bdbdbd" stroke-width=".9"/><rect x="6.8" y="6.5" width="2" height="2" fill="#e0e0e0"/></svg>
<div class="a" style="left:1330px;top:978px;width:32px;height:18px;background:#3a3a3a;border:1px solid #1e1e1e;border-radius:3px"></div><div class="a" style="left:1348px;top:979px;width:1px;height:16px;background:#1e1e1e"></div>
<svg style="left:1332px;top:980px" width="15" height="15"><path d="M5.5 11.5L3.2 8A4 4 0 0 1 10 4L12.3 7.5" fill="none" stroke="#d0d0d0" stroke-width="2" stroke-linecap="round" transform="rotate(-8 7.5 7.5)"/></svg>
<svg style="left:1351px;top:983px" width="7" height="8"><path d="M.8 .8V7.2L6.2 4Z" fill="none" stroke="#999" stroke-width="1"/></svg>
<div class="a" style="left:1364px;top:978px;width:32px;height:18px;background:#2b2b2b;border:1px solid #1e1e1e;border-radius:3px"></div><div class="a" style="left:1382px;top:979px;width:1px;height:16px;background:#1e1e1e"></div>
<svg style="left:1366px;top:980px" width="16" height="15"><path d="M5.5 1V14M7.4 4V12M9.4 6V10" stroke="#e0e0e0" stroke-width="1"/><path d="M1 7.5H4M11 7.5H15" stroke="#e0e0e0" stroke-width="1.1"/></svg>
<svg style="left:1385px;top:983px" width="7" height="8"><path d="M.8 .8V7.2L6.2 4Z" fill="none" stroke="#999" stroke-width="1"/></svg>
<svg style="left:1743px;top:980px" width="14" height="14"><circle cx="6" cy="6" r="4.8" fill="none" stroke="#ccc" stroke-width="1.1"/><path d="M3.5 6H8.5" stroke="#ccc" stroke-width="1.1"/><path d="M9.5 9.5L13 13" stroke="#ccc" stroke-width="1.5"/></svg>
<div class="a" style="left:1762px;top:986px;width:119px;height:3px;background:#2b2b2b;border-radius:2px"></div>
<div class="a" style="left:1762px;top:986px;width:62px;height:3px;background:#dcdcdc;border-radius:2px"></div>
<div class="a" style="left:1819px;top:982px;width:11px;height:11px;background:#66c2a5;border-radius:50%"></div>
<svg style="left:1887px;top:980px" width="14" height="14"><circle cx="6" cy="6" r="4.8" fill="none" stroke="#ccc" stroke-width="1.1"/><path d="M3.5 6H8.5M6 3.5V8.5" stroke="#ccc" stroke-width="1.1"/><path d="M9.5 9.5L13 13" stroke="#ccc" stroke-width="1.5"/></svg>
<!-- ============ STATUS BAR ============ -->
<div class="a" style="left:494px;top:998px;width:1420px;height:6px;background:#141414"></div>
<div class="a" style="left:494px;top:1004px;width:1420px;height:22px;background:#3b3b3b"></div>
<div class="a" style="left:494px;top:1026px;width:1426px;height:3px;background:#1e1e1e"></div>
<div class="a" style="left:498px;top:1011px;width:2px;height:2px;background:#999;box-shadow:0 4px #999,0 8px #999"></div>
<div class="btn" style="left:507px;top:1006px;width:17px;height:17px;background:#2e2e2e"></div>
<svg style="left:508px;top:1007px" width="17" height="17"><path d="M1.2 1.5H12.5V13.5L9.5 11H1.2Z" fill="#e0e0e0"/><g fill="#2e2e2e"><rect x="3" y="3.8" width="1.6" height="1"/><rect x="5.5" y="3.8" width="5" height="1"/><rect x="3" y="5.8" width="1.6" height="1"/><rect x="5.5" y="5.8" width="5" height="1"/><rect x="3" y="7.8" width="1.6" height="1"/><rect x="5.5" y="7.8" width="5" height="1"/></g><path d="M13 16L16 13V16Z" fill="#6ccfb0"/></svg>
<div class="a" style="left:528px;top:1008px;width:18px;height:14px;background:#2ecc71;border-radius:2px"></div>
<div class="t" style="left:534px;top:1009px;color:#111">7</div>
<div class="a" style="left:554px;top:1012px;width:6px;height:6px;background:#2ecc71;border-radius:50%"></div>
<div class="t" style="left:565px;top:1010px">Saved scene to: D:/DATA/AI Creator/Cavalry/text.cv.</div>
<div class="t" style="left:1360px;top:1009px;font-style:italic;font-size:10.4px;line-height:12px">Click to see next message</div>
<div class="a" style="left:1488px;top:1006px;width:80px;height:18px;background:#d4bc6c;border-radius:3px"></div>
<div class="t" style="left:1493px;top:1009px;color:#2a2a2a;font-size:11.3px">Feedback</div>
<svg style="left:1549px;top:1008px" width="13" height="14"><path d="M1 1H8L11 4V13H1Z" fill="#eee" stroke="#7cd08e" stroke-width=".8"/><path d="M4 11L10 5L12 7L6 13Z" fill="#f08a2a"/></svg>
<div class="a" style="left:1571px;top:1006px;width:109px;height:18px;background:#2ecc71;border-radius:3px"></div>
<div class="t" style="left:1577px;top:1009px;color:#1d1d1d;font-size:11.3px">Upgrade to Pro</div>
<svg style="left:1657px;top:1009px" width="16" height="12"><ellipse cx="4.5" cy="7" rx="3.5" ry="4" fill="#f4c430"/><ellipse cx="11.5" cy="7" rx="3.5" ry="4" fill="#f4c430"/></svg>
<div class="a" style="left:1683px;top:1006px;width:119px;height:18px;background:#b794f6;border-radius:3px"></div>
<div class="t" style="left:1689px;top:1009px;color:#2a1a3a;font-size:11.3px">Update Available</div>
<svg style="left:1782px;top:1008px" width="13" height="13"><circle cx="6.5" cy="7" r="5.5" fill="#f2b636"/><path d="M1 2L5 1L4 5Z" fill="#7a5cf0"/><circle cx="9" cy="9" r="2" fill="#5ab4e5"/></svg>
<div class="a" style="left:1805px;top:1006px;width:106px;height:18px;background:#3fb0ea;border-radius:3px"></div>
<div class="t" style="left:1811px;top:1009px;color:#10243a;font-size:11.3px">Tips and Tricks</div>
<svg style="left:1891px;top:1008px" width="13" height="13"><path d="M12 1Q6 1 3.5 7L6 9.5Q12 7 12 1Z" fill="#eee"/><path d="M3.5 7L1 8L2.5 5.5ZM6 9.5L5 12L7.5 10.5Z" fill="#e04040"/><circle cx="8.5" cy="4.5" r="1.2" fill="#e04040"/><path d="M3 10L1 12" stroke="#f08a2a" stroke-width="1.5"/></svg>

</body></html>
